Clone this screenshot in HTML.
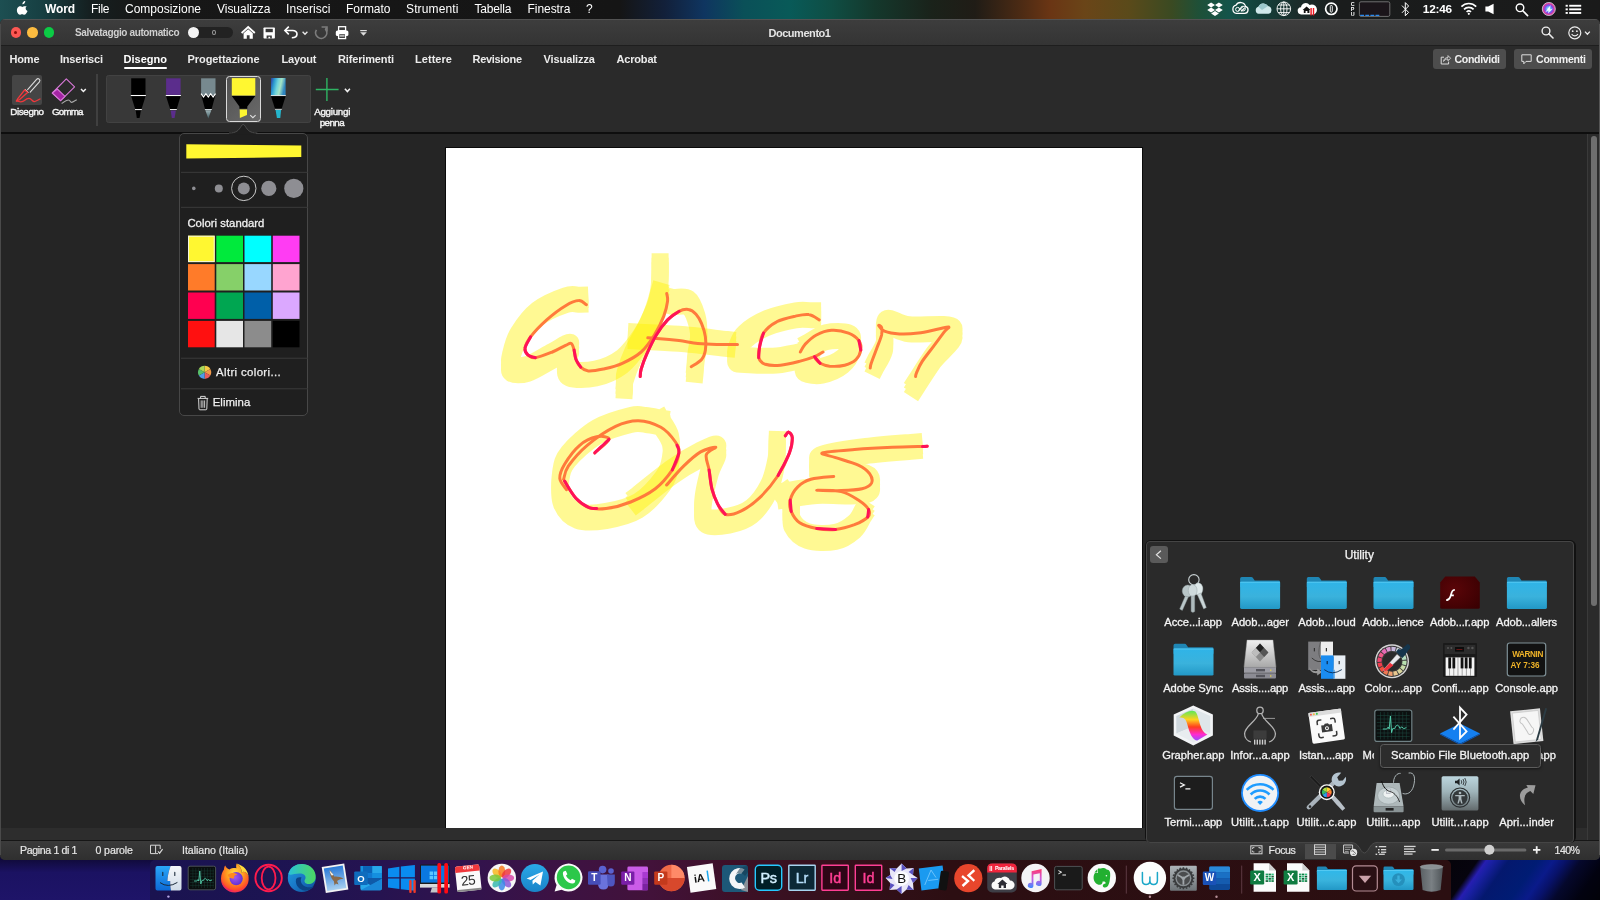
<!DOCTYPE html>
<html lang="it">
<head>
<meta charset="utf-8">
<title>Documento1</title>
<style>
*{box-sizing:border-box;margin:0;padding:0}
html,body{width:1600px;height:900px;overflow:hidden}
body{position:relative;background:#0b0b18;font-family:"Liberation Sans",sans-serif;color:#fff}
.a{position:absolute}
.t{position:absolute;white-space:pre;line-height:1;color:#fff}
#root{position:absolute;left:0;top:0;width:1600px;height:900px;will-change:transform;overflow:hidden}
svg{position:absolute;overflow:visible}
#menubar{left:0;top:0;width:1600px;height:26px;background:linear-gradient(90deg,#1d4f52 0px,#174043 40px,#151f20 90px,#171717 140px,#151515 620px,#12203a 665px,#0f3560 704px,#0a5058 744px,#085a58 790px,#0f4e44 831px,#14382c 875px,#1a221a 932px,#201c16 975px,#4a2a14 1019px,#6a3514 1050px,#6a4518 1085px,#5a4a1a 1129px,#3a4a22 1172px,#1e5038 1199px,#14544a 1229px,#14403a 1260px,#1b2b2a 1300px,#1a1c1c 1340px,#1a1a1a 1600px)}
#win{left:0;top:19px;width:1600px;height:840.5px;background:#252525;border-radius:5px;overflow:hidden}
#titlebar{left:0;top:0;width:1600px;height:26px;background:linear-gradient(#3d3d3d,#343434);border-top:1px solid #525252}
#tabs{left:0;top:26px;width:1600px;height:87px;background:#2a2a2a;border-top:1px solid #1e1e1e}
#ribline{left:0;top:112.7px;width:1600px;height:2.1px;background:#0e0e0e}
#status{left:0;top:821px;width:1600px;height:20px;background:linear-gradient(#3a3a3a,#2f2f2f);border-top:1px solid #161616}
#hscroll{left:0;top:809px;width:1600px;height:12px;background:#2d2d2d}
#vscroll{left:1586.6px;top:115px;width:13.4px;height:706px;background:#2b2b2b;border-left:1.5px solid #3a3a3a}
#vthumb{left:1590.8px;top:116.6px;width:6.6px;height:470px;border-radius:3.3px;background:#6e6e6e}
#page{left:445.2px;top:127.9px;width:698.1px;height:682px;background:#fff;border:1.5px solid #0a0a0a}
#pop{left:179px;top:133px;width:129px;height:283px;background:#1f1f1f;border:1px solid #474747;border-radius:5px}
.sw{position:absolute;width:26.8px;height:26.4px}
#util{left:1146px;top:541px;width:428px;height:302px;background:#2a2a2a;border:1px solid #454545;border-radius:4px}
#dock{left:149.5px;top:859.5px;width:1301px;height:41px;border-radius:5px 5px 0 0;background:linear-gradient(90deg,#1a1350 0,#1c1452 120px,#261350 230px,#33134c 330px,#3c1244 400px,#42123a 500px,#3c1024 600px,#33101a 700px,#2c0e12 800px,#2b0f11 1301px)}
</style>
</head>
<body>
<div id="root">
<div class="a" style="left:0;top:850px;width:160px;height:50px;background:linear-gradient(180deg,#100a3a 0,#100a3a 18%,#1b1262 45%,#1e1468 100%)"></div>
<div class="a" style="left:1440px;top:850px;width:160px;height:50px;background:linear-gradient(125deg,#040308 0,#06040e 23%,#261eb0 27.5%,#1a20a4 30.5%,#04186e 39%,#001c74 54%,#0a1a8a 62%,#08126a 68%,#05082c 76%,#020210 88%,#020208 100%)"></div>
<div id="menubar" class="a"></div>
<svg style="left:17px;top:1.3px" width="11.5" height="14" viewBox="0 0 170 208"><path fill="#fff" d="M150 71c-1 1-22 12-22 38 0 30 26 40 27 41-0 1-4 15-14 29-9 12-18 25-32 25s-18-8-34-8c-16 0-21 8-34 8s-22-12-32-26C-3 161-8 126 8 101c8-13 22-22 38-22 14 0 25 9 33 9 8 0 21-10 37-10 6 0 27 1 34-7zM111 33c7-8 11-19 11-30 0-2 0-3-0-4-11 0-24 7-31 16-6 7-12 18-12 29 0 2 0 3 1 4 1 0 2 0 3 0 10 0 22-6 29-15z"/></svg>
<span class="t" style="top:3.10px;font-size:12.0px;font-weight:bold;left:45.00px;letter-spacing:-0.151px;">Word</span>
<span class="t" style="top:3.10px;font-size:12.0px;left:91.00px;letter-spacing:-0.281px;">File</span>
<span class="t" style="top:3.10px;font-size:12.0px;left:125.00px;letter-spacing:-0.004px;">Composizione</span>
<span class="t" style="top:3.10px;font-size:12.0px;left:217.00px;letter-spacing:-0.035px;">Visualizza</span>
<span class="t" style="top:3.10px;font-size:12.0px;left:286.00px;letter-spacing:0.061px;">Inserisci</span>
<span class="t" style="top:3.10px;font-size:12.0px;left:346.00px;letter-spacing:-0.031px;">Formato</span>
<span class="t" style="top:3.10px;font-size:12.0px;left:406.00px;letter-spacing:0.143px;">Strumenti</span>
<span class="t" style="top:3.10px;font-size:12.0px;left:474.50px;letter-spacing:-0.172px;">Tabella</span>
<span class="t" style="top:3.10px;font-size:12.0px;left:527.50px;letter-spacing:-0.051px;">Finestra</span>
<span class="t" style="top:3.10px;font-size:12.0px;left:586.00px;letter-spacing:-0.688px;">?</span>
<span class="t" style="top:3.50px;font-size:11.8px;font-weight:bold;left:1422.80px;letter-spacing:-0.197px;">12:46</span>
<svg style="left:1200px;top:0" width="400" height="19" viewBox="1200 0 400 19">
 <defs><radialGradient id="siri" cx=".5" cy=".5" r=".5"><stop offset="0" stop-color="#fff"/><stop offset=".25" stop-color="#6ad0f8"/><stop offset=".55" stop-color="#7a4af0"/><stop offset=".85" stop-color="#e83a8a"/><stop offset="1" stop-color="#3a2a6a"/></radialGradient></defs>
 <!-- dropbox -->
 <g fill="#fff"><path d="M1211.1 2.4 1215 4.9 1211.1 7.4 1207.2 4.9ZM1218.9 2.4 1222.8 4.9 1218.9 7.4 1215 4.9ZM1211.1 7.6 1215 10.1 1211.1 12.6 1207.2 10.1ZM1218.9 7.6 1222.8 10.1 1218.9 12.6 1215 10.1ZM1215 10.9 1218.9 13.4 1215 15.9 1211.1 13.4Z"/></g>
 <!-- creative cloud -->
 <g fill="none" stroke="#fff" stroke-width="1.3"><path d="M1236.4 13.4A4.2 4.2 0 0 1 1236 5.2A5.2 5.2 0 0 1 1245.6 6.4A3.6 3.6 0 0 1 1244.6 13.4Z"/><path d="M1238.4 10.6 1242.6 6.8M1241 11.4 1244.6 8" stroke-width="1.1"/><circle cx="1237.6" cy="9.4" r="2" stroke-width="1"/><circle cx="1243" cy="8.6" r="2.4" stroke-width="1"/></g>
 <!-- onedrive cloud -->
 <path d="M1258.6 13.8A3.6 3.6 0 0 1 1258.4 6.8A5.4 5.4 0 0 1 1268 6A4 4 0 0 1 1268.6 13.8Z" fill="#cfe8ea"/><path d="M1258.4 6.8A5.4 5.4 0 0 1 1268 6L1262 10Z" fill="#9cc8cc"/>
 <!-- globe -->
 <g fill="none" stroke="#fff" stroke-width=".9"><circle cx="1283.8" cy="8.8" r="6.8"/><ellipse cx="1283.8" cy="8.8" rx="3.2" ry="6.8"/><path d="M1283.8 2V15.6M1277 8.8H1290.6M1278.2 5H1289.4M1278.2 12.6H1289.4"/></g>
 <!-- parallels access cloud -->
 <path d="M1301.6 14.4A3.6 3.6 0 0 1 1301 7.2A4.8 4.8 0 0 1 1309.6 5A4.6 4.6 0 0 1 1314 14.4Z" fill="#fff"/><path d="M1302.6 10 1306.6 6.4 1310.6 10H1309.4V13H1307.4V11H1305.6V13H1303.8V10Z" fill="#111"/><rect x="1310.4" y="8" width="1.4" height="7.4" fill="#f0141e"/><rect x="1312.8" y="8" width="1.4" height="7.4" fill="#f0141e"/>
 <!-- 1password -->
 <circle cx="1331.3" cy="8.8" r="5.7" fill="none" stroke="#fff" stroke-width="1.7"/><rect x="1330.3" y="5.4" width="2" height="6.8" rx="1" fill="none" stroke="#fff" stroke-width=".9"/>
 <!-- cpu box -->
 <rect x="1359.4" y="1.8" width="30.4" height="14.6" rx="1.6" fill="#1b151a" stroke="#6e6e6e" stroke-width="1"/><path d="M1360.2 15.4H1379.4" stroke="#2a8af0" stroke-width="1.1" stroke-dasharray="3.8 1.3"/>
 <!-- bluetooth -->
 <path d="M1402 5.6 1408.6 12.4 1405.3 15.8V2.6L1408.6 6 1402 12.8" fill="none" stroke="#fff" stroke-width="1" stroke-linejoin="miter"/>
 <!-- wifi -->
 <g fill="none" stroke="#fff" stroke-width="1.7"><path d="M1461.4 6.6A10.4 10.4 0 0 1 1476.2 6.6"/><path d="M1464 9.4A6.8 6.8 0 0 1 1473.6 9.4"/><path d="M1466.6 12A3.2 3.2 0 0 1 1471 12" /></g><circle cx="1468.8" cy="13.8" r="1.1" fill="#fff"/>
 <!-- speaker -->
 <path d="M1485.4 6.6H1488.2L1493.6 3.8V14.2L1488.2 11.4H1485.4Z" fill="#fff"/>
 <!-- search -->
 <circle cx="1520" cy="7.8" r="3.8" fill="none" stroke="#fff" stroke-width="1.4"/><path d="M1522.8 10.8 1527.6 15.6" stroke="#fff" stroke-width="1.6" stroke-linecap="round"/>
 <!-- siri -->
 <circle cx="1548.8" cy="9" r="6.9" fill="url(#siri)"/><circle cx="1548.8" cy="9" r="6.5" fill="none" stroke="#d8d8e0" stroke-width=".8"/><path d="M1545 12.4 1550.6 5 1549.8 9.6 1553 8.6 1548 13.4 1548.6 10.2Z" fill="#fff" opacity=".85"/>
 <!-- list -->
 <g fill="#fff"><rect x="1565.6" y="4.8" width="2.2" height="1.9"/><rect x="1569.2" y="4.8" width="12" height="1.9"/><rect x="1565.6" y="8.4" width="2.2" height="1.9"/><rect x="1569.2" y="8.4" width="12" height="1.9"/><rect x="1565.6" y="12" width="2.2" height="1.9"/><rect x="1569.2" y="12" width="12" height="1.9"/></g>
</svg>
<span class="t" style="left:1350.6px;top:1.8px;font-size:5.4px;font-weight:bold;color:#fff;line-height:4.9px;width:4px;text-align:center;white-space:normal;word-break:break-all">CPU</span>
<div id="win" class="a">
 <div id="titlebar" class="a"></div>
 <div id="tabs" class="a"></div>
 <div id="ribline" class="a"></div>
 <div id="page" class="a"></div>
 <div id="hscroll" class="a"></div>
 <div id="vscroll" class="a"></div>
 <div id="vthumb" class="a"></div>
 <div id="status" class="a"></div>
 <div class="a" style="left:0;top:5px;width:1px;height:831px;background:#4a4a4a"></div>
 <div class="a" style="left:1599px;top:5px;width:1px;height:831px;background:#555"></div>
</div>
<!-- traffic lights -->
<div class="a" style="left:10.6px;top:27.2px;width:10.6px;height:10.6px;border-radius:50%;background:#fc5753"></div>
<div class="a" style="left:14.4px;top:31px;width:3px;height:3px;border-radius:50%;background:#8c0d0a"></div>
<div class="a" style="left:27.2px;top:27.2px;width:10.6px;height:10.6px;border-radius:50%;background:#fdbc40"></div>
<div class="a" style="left:43.8px;top:27.2px;width:10.6px;height:10.6px;border-radius:50%;background:#0bcb45"></div>
<span class="t" style="top:28.10px;font-size:10.0px;font-weight:bold;color:#d0d0d0;left:75.00px;letter-spacing:-0.369px;">Salvataggio automatico</span>
<!-- toggle -->
<div class="a" style="left:187.5px;top:26.8px;width:45px;height:11.2px;border-radius:6px;background:#222"></div>
<div class="a" style="left:187.8px;top:26.8px;width:11.2px;height:11.2px;border-radius:50%;background:#f4f4f4"></div>
<div class="a" style="left:211.5px;top:30.2px;width:4.2px;height:4.6px;border-radius:50%;border:1px solid #9a9a9a"></div>
<!-- home -->
<svg style="left:241px;top:25.5px" width="14.4" height="13.2" viewBox="0 0 14.4 13.2"><path d="M0.6 7 7.2 1 13.8 7" fill="none" stroke="#fff" stroke-width="1.8" stroke-linejoin="miter"/><path d="M2.6 7.2 7.2 3.2 11.8 7.2V12.8H8.6V9.2H5.8V12.8H2.6Z" fill="#fff"/></svg>
<!-- save -->
<svg style="left:262.8px;top:26.6px" width="12.4" height="12" viewBox="0 0 12.4 12"><path d="M0.5 1.2Q0.5 .5 1.2 .5H11.2Q11.9 .5 11.9 1.2V10.8Q11.9 11.5 11.2 11.5H1.2Q.5 11.5 .5 10.8Z" fill="#fff"/><rect x="2.6" y="1.8" width="7.2" height="3.4" fill="#373737"/><path d="M3.6 11.5V8.4H8.8V11.5H7.2V9.8H5.4V11.5Z" fill="#373737"/></svg>
<!-- undo -->
<svg style="left:284px;top:26px" width="14" height="12.4" viewBox="0 0 14 12.4"><path d="M4.8 .6 .9 4.5 4.8 8.4" fill="none" stroke="#fff" stroke-width="1.6" stroke-linejoin="miter"/><path d="M1.2 4.5H8.6C14.6 4.5 14.6 11.7 7.8 11.7" fill="none" stroke="#fff" stroke-width="1.6"/></svg>
<svg style="left:302px;top:30.6px" width="6" height="4.4" viewBox="0 0 6 4.4"><path d="M.6 .7 3 3.3 5.4 .7" fill="none" stroke="#e8e8e8" stroke-width="1.3"/></svg>
<!-- redo -->
<svg style="left:315px;top:26.4px" width="12.4" height="12.8" viewBox="0 0 12.4 12.8"><path d="M1.4 3.9A5.6 5.6 0 1 0 10.7 3.4L11.5 1.5" fill="none" stroke="#7c7c7c" stroke-width="1.7"/><path d="M6.6 1H12V5.4" fill="none" stroke="#7c7c7c" stroke-width="1.6"/></svg>
<!-- print -->
<svg style="left:335.4px;top:25.8px" width="14.2" height="13.4" viewBox="0 0 14.2 13.4"><rect x="3.6" y=".7" width="7" height="4" fill="none" stroke="#fff" stroke-width="1.3"/><rect x=".8" y="4.4" width="12.6" height="5.6" rx="1.6" fill="#fff"/><rect x="3.6" y="7.6" width="7" height="5" fill="#373737" stroke="#fff" stroke-width="1.3"/><rect x="4.6" y="9.4" width="5" height="1.1" fill="#fff"/></svg>
<!-- customize -->
<svg style="left:360px;top:30px" width="7" height="6" viewBox="0 0 7 6"><rect x=".2" y="0" width="6.6" height="1.2" fill="#ddd"/><path d="M.2 2.2H6.8L3.5 5.8Z" fill="#ddd"/></svg>
<span class="t" style="top:28.00px;font-size:11.0px;font-weight:bold;color:#e4e4e4;left:768.40px;letter-spacing:-0.447px;">Documento1</span>
<!-- search -->
<svg style="left:1541px;top:26.4px" width="13" height="13" viewBox="0 0 13 13"><circle cx="5" cy="5" r="3.9" fill="none" stroke="#eee" stroke-width="1.4"/><path d="M7.8 7.8 12 12" stroke="#eee" stroke-width="1.6" stroke-linecap="round"/></svg>
<!-- smiley -->
<svg style="left:1567.5px;top:25.8px" width="24" height="14" viewBox="0 0 24 14"><circle cx="6.8" cy="6.8" r="6" fill="none" stroke="#eee" stroke-width="1.2"/><circle cx="4.7" cy="5.2" r=".9" fill="#eee"/><circle cx="8.9" cy="5.2" r=".9" fill="#eee"/><path d="M3.6 8.2Q6.8 11.6 10 8.2" fill="none" stroke="#eee" stroke-width="1.1"/><path d="M17 5.6 19.4 8.2 21.8 5.6" fill="none" stroke="#eee" stroke-width="1.3"/></svg>
<!-- tabs -->
<span class="t" style="top:53.60px;font-size:11.0px;font-weight:bold;color:#ececec;left:9.40px;letter-spacing:-0.121px;">Home</span>
<span class="t" style="top:53.60px;font-size:11.0px;font-weight:bold;color:#ececec;left:60.00px;letter-spacing:-0.205px;">Inserisci</span>
<span class="t" style="top:53.60px;font-size:11.0px;font-weight:bold;color:#fff;left:123.50px;letter-spacing:0.016px;">Disegno</span>
<div class="a" style="left:123.5px;top:67.3px;width:43.5px;height:1.6px;background:#fff;border-radius:1px"></div>
<span class="t" style="top:53.60px;font-size:11.0px;font-weight:bold;color:#ececec;left:187.50px;letter-spacing:-0.061px;">Progettazione</span>
<span class="t" style="top:53.60px;font-size:11.0px;font-weight:bold;color:#ececec;left:281.50px;letter-spacing:-0.212px;">Layout</span>
<span class="t" style="top:53.60px;font-size:11.0px;font-weight:bold;color:#ececec;left:338.00px;letter-spacing:-0.147px;">Riferimenti</span>
<span class="t" style="top:53.60px;font-size:11.0px;font-weight:bold;color:#ececec;left:415.00px;letter-spacing:0.052px;">Lettere</span>
<span class="t" style="top:53.60px;font-size:11.0px;font-weight:bold;color:#ececec;left:472.50px;letter-spacing:-0.309px;">Revisione</span>
<span class="t" style="top:53.60px;font-size:11.0px;font-weight:bold;color:#ececec;left:543.50px;letter-spacing:-0.099px;">Visualizza</span>
<span class="t" style="top:53.60px;font-size:11.0px;font-weight:bold;color:#ececec;left:616.50px;letter-spacing:-0.177px;">Acrobat</span>
<!-- share / comments -->
<div class="a" style="left:1432.5px;top:49px;width:73.5px;height:20px;border-radius:3px;background:#4d4d4d"></div>
<div class="a" style="left:1514px;top:49px;width:78px;height:20px;border-radius:3px;background:#4d4d4d"></div>
<svg style="left:1439.5px;top:53.5px" width="11" height="11" viewBox="0 0 11 11"><path d="M4 3.2H1.2V10H8.6V7.6" fill="none" stroke="#ddd" stroke-width="1"/><path d="M3.6 7.4C3.8 5 5.4 3.6 8 3.6V1.6L10.6 4.2 8 6.8V5C6 5 4.6 5.8 3.6 7.4Z" fill="none" stroke="#ddd" stroke-width=".9" stroke-linejoin="round"/></svg>
<span class="t" style="top:53.90px;font-size:10.6px;font-weight:bold;color:#f0f0f0;left:1454.50px;letter-spacing:-0.346px;">Condividi</span>
<svg style="left:1521px;top:54px" width="11" height="11" viewBox="0 0 11 11"><path d="M.8 .8H10.2V7.4H5L2.8 9.8V7.4H.8Z" fill="none" stroke="#ddd" stroke-width="1" stroke-linejoin="round"/></svg>
<span class="t" style="top:53.90px;font-size:10.6px;font-weight:bold;color:#f0f0f0;left:1536.00px;letter-spacing:-0.257px;">Commenti</span>
<!-- RIBBON -->
<div class="a" style="left:12.4px;top:75px;width:30px;height:29.8px;border-radius:2px;background:#454545"></div>
<svg style="left:0;top:72px" width="110" height="60" viewBox="0 72 110 60">
 <g fill="none" stroke-linecap="round" stroke-linejoin="round">
  <path d="M27.6 89.6 36.6 79.4A1.7 1.7 0 0 1 39.4 81.8L30.2 92.2" stroke="#dcdcdc" stroke-width="1.1"/>
  <path d="M25.2 89.4 28.2 92.4" stroke="#dcdcdc" stroke-width="1"/>
  <path d="M24.6 90 18 98.4 16.4 101 19.6 99.6 27.6 92.4Z" stroke="#f2383c" stroke-width="1.3"/>
  <path d="M16.4 101C19 101.8 22.6 102.2 24.4 100.6S28 97.8 30 98.6 32.6 101.8 34.4 101.6 38.4 99.8 40 99" stroke="#f2383c" stroke-width="1.3"/>
  <path d="M66.3 78.8 74.6 86.8 60.6 100.6 52.3 93Z" stroke="#d878d8" stroke-width="1.1"/>
  <path d="M57.3 89 65 96.4 60.6 100.6 52.3 93Z" fill="#a424a4" stroke="#d878d8" stroke-width="1.1"/>
  <path d="M62 103.3C64.5 101.5 66.5 100 68.5 100S70 102.6 71.6 102.4 75 100.6 76.4 99.9" stroke="#aaa" stroke-width="1.1"/>
  <path d="M81 88.9 83.4 91.5 85.8 88.9" stroke="#f2f2f2" stroke-width="1.5" stroke-linejoin="miter" stroke-linecap="butt"/>
 </g>
</svg>
<span class="t" style="top:106.80px;font-size:9.8px;color:#f4f4f4;left:10.30px;letter-spacing:-0.376px;-webkit-text-stroke:.4px #f4f4f4">Disegno</span>
<span class="t" style="top:106.80px;font-size:9.8px;color:#f4f4f4;left:52.00px;letter-spacing:-0.836px;-webkit-text-stroke:.4px #f4f4f4">Gomma</span>
<div class="a" style="left:96.4px;top:74.4px;width:1.3px;height:51.2px;background:#404040"></div>
<div class="a" style="left:106px;top:75px;width:204.8px;height:48px;border-radius:2.5px;background:#383838;border:1px solid #424242"></div>
<div class="a" style="left:226px;top:76.1px;width:34.8px;height:46px;border-radius:3.5px;background:linear-gradient(135deg,#505050,#6a6a6a);border:1.3px solid #dadada"></div>
<svg style="left:105px;top:72px" width="255" height="60" viewBox="105 72 255 60">
 <defs>
  <linearGradient id="gx" x1="0" y1="0" x2="1" y2="0.25"><stop offset="0" stop-color="#2f3a9c"/><stop offset=".25" stop-color="#2a9ad0"/><stop offset=".5" stop-color="#6fd4dc"/><stop offset=".72" stop-color="#a4e4c4"/><stop offset="1" stop-color="#2f86c0"/></linearGradient>
  <linearGradient id="gt" x1="0" y1="0" x2="0" y2="1"><stop offset="0" stop-color="#9fb4b8"/><stop offset="1" stop-color="#3e5a60"/></linearGradient>
 </defs>
 <!-- pen1 -->
 <rect x="131.2" y="78.3" width="14.3" height="16.6" fill="#000"/>
 <rect x="130.8" y="95" width="15.1" height="1" fill="#fff"/>
 <path d="M131.2 96.3H145.5L141.6 109H135.2Z" fill="#000"/>
 <rect x="135" y="109.1" width="6.8" height=".9" fill="#fff"/>
 <path d="M135.7 110.4H140.9L139.6 118H136.8Z" fill="#000"/>
 <!-- pen2 -->
 <rect x="166.1" y="78.3" width="14.5" height="16.6" fill="#5b2d8c"/>
 <rect x="165.8" y="95" width="15.1" height="1" fill="#fff"/>
 <path d="M166.1 96.3H180.6L176.7 109H170.1Z" fill="#000"/>
 <rect x="170" y="109.1" width="6.8" height=".9" fill="#fff"/>
 <path d="M170.7 110.4H175.9L174.6 118H171.8Z" fill="#5b2d8c"/>
 <!-- pen3 pencil -->
 <rect x="201.1" y="78.3" width="14.4" height="17" fill="#77898f"/>
 <path d="M201.1 94.5 203.5 97.6 205.9 94.5 208.3 97.6 210.7 94.5 213.1 97.6 215.5 94.5 211.7 109H205Z" fill="#000"/>
 <path d="M201.1 93.6 203.5 97 205.9 93.6 208.3 97 210.7 93.6 213.1 97 215.5 93.6" fill="none" stroke="#fff" stroke-width="1.1"/>
 <rect x="204.9" y="109.1" width="6.9" height=".9" fill="#dfe8ea"/>
 <path d="M205.3 110.2H211.3L208.3 118.6Z" fill="url(#gt)"/>
 <!-- pen4 highlighter -->
 <rect x="231.8" y="78.1" width="23.5" height="17.4" fill="#fff731"/>
 <path d="M231.8 96.1H255.3L247.3 106.5V108.8H239.4V106.5Z" fill="#000"/>
 <path d="M239.7 109.6H247V115L239.9 118Z" fill="#fff731"/>
 <path d="M250.2 115.2 252.9 117.7 255.6 115.2" fill="none" stroke="#e0e0e0" stroke-width="1.1"/>
 <!-- pen5 galaxy -->
 <rect x="271" y="78" width="14.6" height="17" fill="url(#gx)"/>
 <rect x="270.8" y="95" width="15" height=".9" fill="#e8f4f4"/>
 <path d="M271 96.3H285.6L281.7 108.8H275Z" fill="#000"/>
 <rect x="275" y="108.9" width="6.8" height=".8" fill="#e8f4f4"/>
 <path d="M275.6 109.9H281.1L280.3 118H276.9Z" fill="#25b5cc"/>
 <!-- plus -->
 <path d="M326.9 78V101M315.8 89.5H338.6" stroke="#2fb463" stroke-width="1.4" fill="none"/>
 <path d="M344.9 88.8 347.4 91.6 349.9 88.8" fill="none" stroke="#f2f2f2" stroke-width="1.5"/>
</svg>
<span class="t" style="top:107.40px;font-size:9.8px;color:#f4f4f4;left:314.20px;letter-spacing:-0.277px;-webkit-text-stroke:.4px #f4f4f4">Aggiungi</span>
<span class="t" style="top:117.90px;font-size:9.8px;color:#f4f4f4;left:319.70px;letter-spacing:-0.562px;-webkit-text-stroke:.4px #f4f4f4">penna</span>
<!-- handwriting (ink strokes) -->
<svg style="left:446px;top:148.5px" width="695.5" height="679" viewBox="446 148.5 695.5 679" role="img" aria-label="WACOM ONE">
<defs><linearGradient id="ink" gradientUnits="userSpaceOnUse" x1="560" y1="290" x2="640" y2="420" spreadMethod="reflect"><stop offset="0" stop-color="#ff7a3c"/><stop offset=".72" stop-color="#ff7a3c"/><stop offset=".9" stop-color="#ff2a55"/><stop offset="1" stop-color="#ff0a58"/></linearGradient></defs>
<g opacity=".42" fill="none" stroke="#fff200" stroke-width="17" stroke-linecap="square" stroke-linejoin="round">
<path d="M579.8 299.3C577.4 299.4 572.7 297.3 565.6 299.7C558.5 302.1 545.1 307.6 537.2 313.7C529.4 319.8 522.8 329.1 518.3 336.4C513.9 343.6 512.0 351.8 510.8 357.2C509.6 362.5 508.3 366.4 511.2 368.3C514.0 370.2 520.9 370.5 527.8 368.3C534.7 366.1 545.3 358.9 552.4 355.3C559.4 351.6 568.1 345.2 570.3 346.2C572.5 347.1 565.7 356.5 565.6 360.9C565.4 365.4 564.3 371.0 569.4 373.0C574.4 375.0 587.0 375.0 595.8 373.0C604.6 371.0 614.7 366.7 622.3 360.9C629.8 355.1 635.8 346.4 641.2 338.3C646.5 330.1 651.4 319.0 654.4 311.8C657.4 304.6 658.3 297.6 659.1 294.8"/><path transform="translate(0 -4.5)" d="M579.8 299.3C577.4 299.4 572.7 297.3 565.6 299.7C558.5 302.1 545.1 307.6 537.2 313.7C529.4 319.8 522.8 329.1 518.3 336.4C513.9 343.6 512.0 351.8 510.8 357.2C509.6 362.5 508.3 366.4 511.2 368.3C514.0 370.2 520.9 370.5 527.8 368.3C534.7 366.1 545.3 358.9 552.4 355.3C559.4 351.6 568.1 345.2 570.3 346.2C572.5 347.1 565.7 356.5 565.6 360.9C565.4 365.4 564.3 371.0 569.4 373.0C574.4 375.0 587.0 375.0 595.8 373.0C604.6 371.0 614.7 366.7 622.3 360.9C629.8 355.1 635.8 346.4 641.2 338.3C646.5 330.1 651.4 319.0 654.4 311.8C657.4 304.6 658.3 297.6 659.1 294.8"/><path transform="translate(0 4.5)" d="M579.8 299.3C577.4 299.4 572.7 297.3 565.6 299.7C558.5 302.1 545.1 307.6 537.2 313.7C529.4 319.8 522.8 329.1 518.3 336.4C513.9 343.6 512.0 351.8 510.8 357.2C509.6 362.5 508.3 366.4 511.2 368.3C514.0 370.2 520.9 370.5 527.8 368.3C534.7 366.1 545.3 358.9 552.4 355.3C559.4 351.6 568.1 345.2 570.3 346.2C572.5 347.1 565.7 356.5 565.6 360.9C565.4 365.4 564.3 371.0 569.4 373.0C574.4 375.0 587.0 375.0 595.8 373.0C604.6 371.0 614.7 366.7 622.3 360.9C629.8 355.1 635.8 346.4 641.2 338.3C646.5 330.1 651.4 319.0 654.4 311.8C657.4 304.6 658.3 297.6 659.1 294.8"/>
</g>
<g opacity=".42" fill="none" stroke="#fff200" stroke-width="17" stroke-linecap="square" stroke-linejoin="round">
<path d="M660.1 265.7C660.1 267.1 660.4 268.8 660.1 274.0C659.7 279.2 660.1 288.2 658.2 296.7C656.3 305.2 652.8 315.6 648.7 325.0C644.6 334.5 637.5 344.9 633.6 353.4C629.7 361.9 626.6 370.7 625.1 376.0C623.6 381.4 624.6 383.8 624.5 385.3"/><path transform="translate(0 -4.5)" d="M660.1 265.7C660.1 267.1 660.4 268.8 660.1 274.0C659.7 279.2 660.1 288.2 658.2 296.7C656.3 305.2 652.8 315.6 648.7 325.0C644.6 334.5 637.5 344.9 633.6 353.4C629.7 361.9 626.6 370.7 625.1 376.0C623.6 381.4 624.6 383.8 624.5 385.3"/><path transform="translate(0 4.5)" d="M660.1 265.7C660.1 267.1 660.4 268.8 660.1 274.0C659.7 279.2 660.1 288.2 658.2 296.7C656.3 305.2 652.8 315.6 648.7 325.0C644.6 334.5 637.5 344.9 633.6 353.4C629.7 361.9 626.6 370.7 625.1 376.0C623.6 381.4 624.6 383.8 624.5 385.3"/>
<path d="M660.1 296.7C661.9 297.4 666.7 300.3 671.4 301.2C676.1 302.2 684.1 299.3 688.4 302.4C692.7 305.4 695.2 313.4 696.9 319.4C698.6 325.3 699.0 332.0 698.8 338.3C698.6 344.6 696.6 352.0 696.0 357.2C695.3 362.3 695.2 367.2 695.0 369.2"/><path transform="translate(0 -4.5)" d="M660.1 296.7C661.9 297.4 666.7 300.3 671.4 301.2C676.1 302.2 684.1 299.3 688.4 302.4C692.7 305.4 695.2 313.4 696.9 319.4C698.6 325.3 699.0 332.0 698.8 338.3C698.6 344.6 696.6 352.0 696.0 357.2C695.3 362.3 695.2 367.2 695.0 369.2"/><path transform="translate(0 4.5)" d="M660.1 296.7C661.9 297.4 666.7 300.3 671.4 301.2C676.1 302.2 684.1 299.3 688.4 302.4C692.7 305.4 695.2 313.4 696.9 319.4C698.6 325.3 699.0 332.0 698.8 338.3C698.6 344.6 696.6 352.0 696.0 357.2C695.3 362.3 695.2 367.2 695.0 369.2"/>
</g>
<g opacity=".42" fill="none" stroke="#fff200" stroke-width="17" stroke-linecap="square" stroke-linejoin="round">
<path d="M636.4 336.0C643.5 336.4 663.8 337.0 679.0 338.3C694.1 339.5 719.1 342.7 727.1 343.5"/><path transform="translate(0 -4.5)" d="M636.4 336.0C643.5 336.4 663.8 337.0 679.0 338.3C694.1 339.5 719.1 342.7 727.1 343.5"/><path transform="translate(0 4.5)" d="M636.4 336.0C643.5 336.4 663.8 337.0 679.0 338.3C694.1 339.5 719.1 342.7 727.1 343.5"/>
</g>
<g opacity=".42" fill="none" stroke="#fff200" stroke-width="17" stroke-linecap="square" stroke-linejoin="round">
<path d="M812.6 314.8C809.8 314.8 803.1 313.6 795.6 314.8C788.0 316.1 775.7 318.8 767.2 322.4C758.7 326.0 749.6 331.8 744.6 336.4C739.5 340.9 738.4 346.0 737.0 349.6C735.6 353.2 734.8 356.5 736.1 358.1C737.3 359.7 737.8 359.1 744.6 359.4C751.3 359.7 765.7 361.0 776.7 360.0C787.7 359.0 805.0 354.5 810.7 353.4"/><path transform="translate(0 -4.5)" d="M812.6 314.8C809.8 314.8 803.1 313.6 795.6 314.8C788.0 316.1 775.7 318.8 767.2 322.4C758.7 326.0 749.6 331.8 744.6 336.4C739.5 340.9 738.4 346.0 737.0 349.6C735.6 353.2 734.8 356.5 736.1 358.1C737.3 359.7 737.8 359.1 744.6 359.4C751.3 359.7 765.7 361.0 776.7 360.0C787.7 359.0 805.0 354.5 810.7 353.4"/><path transform="translate(0 4.5)" d="M812.6 314.8C809.8 314.8 803.1 313.6 795.6 314.8C788.0 316.1 775.7 318.8 767.2 322.4C758.7 326.0 749.6 331.8 744.6 336.4C739.5 340.9 738.4 346.0 737.0 349.6C735.6 353.2 734.8 356.5 736.1 358.1C737.3 359.7 737.8 359.1 744.6 359.4C751.3 359.7 765.7 361.0 776.7 360.0C787.7 359.0 805.0 354.5 810.7 353.4"/>
<path d="M808.8 345.8C811.6 344.3 819.2 338.3 825.8 336.7C832.4 335.2 844.1 335.2 848.5 336.7C852.9 338.3 853.2 341.8 852.3 345.8C851.3 349.8 847.9 356.9 842.8 360.9C837.8 365.0 828.3 368.9 822.0 370.2C815.7 371.4 808.2 370.0 805.0 368.5C801.9 366.9 803.5 362.2 803.1 360.9"/><path transform="translate(0 -4.5)" d="M808.8 345.8C811.6 344.3 819.2 338.3 825.8 336.7C832.4 335.2 844.1 335.2 848.5 336.7C852.9 338.3 853.2 341.8 852.3 345.8C851.3 349.8 847.9 356.9 842.8 360.9C837.8 365.0 828.3 368.9 822.0 370.2C815.7 371.4 808.2 370.0 805.0 368.5C801.9 366.9 803.5 362.2 803.1 360.9"/><path transform="translate(0 4.5)" d="M808.8 345.8C811.6 344.3 819.2 338.3 825.8 336.7C832.4 335.2 844.1 335.2 848.5 336.7C852.9 338.3 853.2 341.8 852.3 345.8C851.3 349.8 847.9 356.9 842.8 360.9C837.8 365.0 828.3 368.9 822.0 370.2C815.7 371.4 808.2 370.0 805.0 368.5C801.9 366.9 803.5 362.2 803.1 360.9"/>
<path d="M875.9 362.6C877.3 359.8 882.7 352.5 884.4 345.8C886.1 339.2 882.2 325.6 886.3 322.8C890.4 319.9 897.8 327.5 909.0 328.8C920.1 330.2 949.3 326.2 953.4 330.9C957.5 335.6 939.8 348.2 933.5 357.2C927.2 366.1 918.6 379.8 915.6 384.4"/><path transform="translate(0 -4.5)" d="M875.9 362.6C877.3 359.8 882.7 352.5 884.4 345.8C886.1 339.2 882.2 325.6 886.3 322.8C890.4 319.9 897.8 327.5 909.0 328.8C920.1 330.2 949.3 326.2 953.4 330.9C957.5 335.6 939.8 348.2 933.5 357.2C927.2 366.1 918.6 379.8 915.6 384.4"/><path transform="translate(0 4.5)" d="M875.9 362.6C877.3 359.8 882.7 352.5 884.4 345.8C886.1 339.2 882.2 325.6 886.3 322.8C890.4 319.9 897.8 327.5 909.0 328.8C920.1 330.2 949.3 326.2 953.4 330.9C957.5 335.6 939.8 348.2 933.5 357.2C927.2 366.1 918.6 379.8 915.6 384.4"/>
</g>
<g opacity=".42" fill="none" stroke="#fff200" stroke-width="17" stroke-linecap="square" stroke-linejoin="round">
<path d="M660.9 422.1C658.4 421.7 650.9 419.9 645.8 419.5C640.8 419.0 638.9 417.5 630.7 419.5C622.5 421.5 607.1 425.5 596.7 431.6C586.3 437.7 574.3 448.9 568.3 456.1C562.4 463.4 561.9 467.8 560.8 475.0C559.7 482.3 558.9 492.9 561.7 499.6C564.6 506.3 570.4 512.8 577.8 515.5C585.2 518.1 596.1 517.2 606.1 515.5C616.2 513.8 628.8 511.1 638.3 505.3C647.7 499.5 657.5 487.9 662.8 480.7C668.2 473.5 669.1 468.7 670.4 461.8C671.6 454.9 672.0 445.7 670.4 439.1C668.8 432.5 662.5 425.0 660.9 422.1"/><path transform="translate(0 -4.5)" d="M660.9 422.1C658.4 421.7 650.9 419.9 645.8 419.5C640.8 419.0 638.9 417.5 630.7 419.5C622.5 421.5 607.1 425.5 596.7 431.6C586.3 437.7 574.3 448.9 568.3 456.1C562.4 463.4 561.9 467.8 560.8 475.0C559.7 482.3 558.9 492.9 561.7 499.6C564.6 506.3 570.4 512.8 577.8 515.5C585.2 518.1 596.1 517.2 606.1 515.5C616.2 513.8 628.8 511.1 638.3 505.3C647.7 499.5 657.5 487.9 662.8 480.7C668.2 473.5 669.1 468.7 670.4 461.8C671.6 454.9 672.0 445.7 670.4 439.1C668.8 432.5 662.5 425.0 660.9 422.1"/><path transform="translate(0 4.5)" d="M660.9 422.1C658.4 421.7 650.9 419.9 645.8 419.5C640.8 419.0 638.9 417.5 630.7 419.5C622.5 421.5 607.1 425.5 596.7 431.6C586.3 437.7 574.3 448.9 568.3 456.1C562.4 463.4 561.9 467.8 560.8 475.0C559.7 482.3 558.9 492.9 561.7 499.6C564.6 506.3 570.4 512.8 577.8 515.5C585.2 518.1 596.1 517.2 606.1 515.5C616.2 513.8 628.8 511.1 638.3 505.3C647.7 499.5 657.5 487.9 662.8 480.7C668.2 473.5 669.1 468.7 670.4 461.8C671.6 454.9 672.0 445.7 670.4 439.1C668.8 432.5 662.5 425.0 660.9 422.1"/>
</g>
<g opacity=".42" fill="none" stroke="#fff200" stroke-width="17" stroke-linecap="square" stroke-linejoin="round">
<path d="M637.3 498.6C643.1 494.1 661.7 478.7 672.3 471.3C682.8 463.8 693.1 458.0 700.6 454.2C708.2 450.5 716.0 446.2 717.6 448.8C719.2 451.3 712.5 460.3 710.1 469.4C707.6 478.5 703.5 494.9 702.9 503.4C702.2 511.8 701.9 517.4 706.3 520.2C710.6 523.0 721.4 521.7 729.0 520.2C736.5 518.6 745.0 516.3 751.6 510.9C758.2 505.6 764.5 496.4 768.6 488.3C772.7 480.1 774.8 469.3 776.2 461.8C777.6 454.3 777.0 446.5 777.1 443.5"/><path transform="translate(0 -4.5)" d="M637.3 498.6C643.1 494.1 661.7 478.7 672.3 471.3C682.8 463.8 693.1 458.0 700.6 454.2C708.2 450.5 716.0 446.2 717.6 448.8C719.2 451.3 712.5 460.3 710.1 469.4C707.6 478.5 703.5 494.9 702.9 503.4C702.2 511.8 701.9 517.4 706.3 520.2C710.6 523.0 721.4 521.7 729.0 520.2C736.5 518.6 745.0 516.3 751.6 510.9C758.2 505.6 764.5 496.4 768.6 488.3C772.7 480.1 774.8 469.3 776.2 461.8C777.6 454.3 777.0 446.5 777.1 443.5"/><path transform="translate(0 4.5)" d="M637.3 498.6C643.1 494.1 661.7 478.7 672.3 471.3C682.8 463.8 693.1 458.0 700.6 454.2C708.2 450.5 716.0 446.2 717.6 448.8C719.2 451.3 712.5 460.3 710.1 469.4C707.6 478.5 703.5 494.9 702.9 503.4C702.2 511.8 701.9 517.4 706.3 520.2C710.6 523.0 721.4 521.7 729.0 520.2C736.5 518.6 745.0 516.3 751.6 510.9C758.2 505.6 764.5 496.4 768.6 488.3C772.7 480.1 774.8 469.3 776.2 461.8C777.6 454.3 777.0 446.5 777.1 443.5"/>
<path d="M914.0 446.1C906.0 446.8 881.1 448.5 865.8 450.5C850.5 452.4 830.2 455.5 822.4 458.0C814.5 460.5 818.6 463.1 818.6 465.6C818.6 468.1 814.5 471.3 822.4 473.1C830.2 475.0 858.6 474.1 865.8 476.9C873.1 479.8 874.0 487.9 865.8 490.1C857.6 492.4 830.1 489.7 816.7 490.5C803.3 491.3 790.7 494.1 785.5 494.9"/><path transform="translate(0 -4.5)" d="M914.0 446.1C906.0 446.8 881.1 448.5 865.8 450.5C850.5 452.4 830.2 455.5 822.4 458.0C814.5 460.5 818.6 463.1 818.6 465.6C818.6 468.1 814.5 471.3 822.4 473.1C830.2 475.0 858.6 474.1 865.8 476.9C873.1 479.8 874.0 487.9 865.8 490.1C857.6 492.4 830.1 489.7 816.7 490.5C803.3 491.3 790.7 494.1 785.5 494.9"/><path transform="translate(0 4.5)" d="M914.0 446.1C906.0 446.8 881.1 448.5 865.8 450.5C850.5 452.4 830.2 455.5 822.4 458.0C814.5 460.5 818.6 463.1 818.6 465.6C818.6 468.1 814.5 471.3 822.4 473.1C830.2 475.0 858.6 474.1 865.8 476.9C873.1 479.8 874.0 487.9 865.8 490.1C857.6 492.4 830.1 489.7 816.7 490.5C803.3 491.3 790.7 494.1 785.5 494.9"/>
<path d="M785.5 494.9C786.5 496.3 790.1 498.8 791.2 503.4C792.3 507.9 789.4 516.9 792.1 522.3C794.8 527.6 800.0 533.1 807.2 535.5C814.5 537.9 827.7 538.0 835.6 536.4C843.5 534.9 849.9 530.0 854.5 526.0C859.0 522.1 861.6 515.0 863.0 512.8"/><path transform="translate(0 -4.5)" d="M785.5 494.9C786.5 496.3 790.1 498.8 791.2 503.4C792.3 507.9 789.4 516.9 792.1 522.3C794.8 527.6 800.0 533.1 807.2 535.5C814.5 537.9 827.7 538.0 835.6 536.4C843.5 534.9 849.9 530.0 854.5 526.0C859.0 522.1 861.6 515.0 863.0 512.8"/><path transform="translate(0 4.5)" d="M785.5 494.9C786.5 496.3 790.1 498.8 791.2 503.4C792.3 507.9 789.4 516.9 792.1 522.3C794.8 527.6 800.0 533.1 807.2 535.5C814.5 537.9 827.7 538.0 835.6 536.4C843.5 534.9 849.9 530.0 854.5 526.0C859.0 522.1 861.6 515.0 863.0 512.8"/>
</g>
<g fill="none" stroke="#ff7a3c" stroke-width="3" stroke-linecap="round" stroke-linejoin="round">
<path d="M586.4 304.2C585.1 303.6 582.3 299.9 578.8 300.1C575.3 300.2 570.9 302.0 565.6 305.2C560.2 308.4 552.5 314.2 546.7 319.4C540.9 324.6 534.2 331.6 530.6 336.4C527.0 341.1 525.4 344.7 525.0 347.7C524.5 350.7 526.1 352.7 527.8 354.3C529.5 355.9 531.3 357.6 535.3 357.2C539.4 356.7 547.3 353.5 552.4 351.5C557.4 349.4 562.4 346.3 565.6 344.9C568.7 343.5 569.8 342.2 571.3 343.0C572.7 343.8 573.3 346.9 574.1 349.6C574.9 352.3 574.9 356.2 576.0 359.0C577.1 361.9 578.7 364.7 580.7 366.6C582.7 368.5 584.5 370.1 588.3 370.4C592.0 370.7 597.7 369.7 603.4 368.5C609.0 367.2 616.0 365.7 622.3 362.8C628.6 360.0 635.8 356.2 641.2 351.5C646.5 346.8 650.6 340.5 654.4 334.5C658.2 328.5 661.6 321.3 663.8 315.6C666.0 309.9 667.1 304.2 667.6 300.5C668.1 296.7 666.8 294.2 666.7 292.9"/>
<path d="M640.2 376.0C640.4 374.8 640.1 372.3 641.2 368.5C642.3 364.7 644.3 359.0 646.8 353.4C649.4 347.7 652.8 340.1 656.3 334.5C659.7 328.8 663.8 323.3 667.6 319.4C671.4 315.4 675.5 312.6 679.0 310.9C682.4 309.1 685.6 308.5 688.4 309.0C691.2 309.4 693.8 311.3 696.0 313.7C698.2 316.1 700.1 319.4 701.6 323.1C703.2 326.9 704.8 332.0 705.4 336.4C706.0 340.8 706.0 345.8 705.4 349.6C704.8 353.4 704.0 356.3 701.6 359.0C699.3 361.8 693.0 365.0 691.2 366.2"/>
<path d="M647.8 337.3C649.8 337.5 654.9 337.8 660.1 338.3C665.3 338.7 672.7 339.4 679.0 340.1C685.3 340.9 691.6 342.3 697.8 343.0C704.1 343.6 710.1 343.8 716.7 343.9C723.4 344.1 734.1 343.9 737.5 343.9"/>
<path d="M819.2 319.4C817.5 318.5 812.7 314.7 808.8 314.1C804.9 313.4 800.9 314.4 795.6 315.6C790.2 316.8 782.0 318.4 776.7 321.3C771.3 324.1 766.3 328.5 763.5 332.6C760.6 336.7 760.5 341.7 759.7 345.8C758.9 349.9 757.8 354.2 758.7 357.2C759.7 360.1 761.7 362.5 765.3 363.8C769.0 365.0 774.8 365.2 780.5 364.7C786.1 364.2 793.7 362.3 799.4 360.9C805.0 359.5 810.5 357.8 814.5 356.2C818.4 354.6 821.6 352.3 823.0 351.5"/>
<path d="M800.3 351.5C801.1 350.2 802.4 346.8 805.0 343.9C807.7 341.1 812.0 336.8 816.4 334.5C820.8 332.1 826.1 330.1 831.5 329.8C836.8 329.4 843.9 330.9 848.5 332.6C853.1 334.3 856.8 337.3 858.9 340.1C860.9 343.0 861.2 346.4 860.8 349.6C860.3 352.7 858.7 356.5 856.0 359.0C853.4 361.6 849.1 363.6 844.7 364.7C840.3 365.8 833.7 366.0 829.6 365.7C825.5 365.3 822.5 364.1 820.1 362.8C817.8 361.6 816.2 358.9 815.4 358.1"/>
<path d="M870.2 367.5C870.4 366.8 870.1 366.1 871.2 362.8C872.3 359.5 875.1 352.4 876.8 347.7C878.6 343.0 880.8 337.9 881.6 334.5C882.3 331.0 882.0 328.5 881.6 326.9C881.1 325.3 878.2 324.4 878.7 325.0C879.2 325.7 880.9 329.3 884.4 330.7C887.9 332.1 893.8 333.2 899.5 333.5C905.2 333.8 912.1 333.4 918.4 332.6C924.7 331.8 932.3 329.8 937.3 328.8C942.3 327.8 947.4 326.2 948.6 326.5C949.9 326.9 947.4 327.5 944.9 330.7C942.3 333.9 937.3 340.8 933.5 345.8C929.7 350.9 925.0 356.5 922.2 360.9C919.3 365.3 917.6 369.7 916.5 372.3C915.4 374.8 915.7 375.4 915.6 376.0"/>
<path d="M594.8 452.4C597.2 450.1 608.7 441.4 609.0 438.8C609.3 436.1 601.6 435.3 596.7 436.3C591.8 437.3 585.0 440.2 579.7 444.8C574.3 449.4 567.9 458.2 564.6 463.7C561.3 469.2 559.5 473.6 559.8 477.9C560.2 482.1 565.4 487.3 566.5 489.2"/>
<path d="M564.6 480.7C566.5 483.5 571.8 493.3 575.9 497.7C580.0 502.1 584.1 505.4 589.1 507.2C594.2 508.9 599.2 509.0 606.1 508.1C613.1 507.2 622.5 504.8 630.7 501.5C638.9 498.2 648.3 493.6 655.3 488.3C662.2 482.9 668.3 475.3 672.3 469.4C676.2 463.4 678.4 457.1 678.9 452.4C679.4 447.6 678.1 445.3 675.1 441.0C672.1 436.8 667.1 430.3 660.9 426.8C654.8 423.4 645.8 420.4 638.3 420.2C630.7 420.1 624.1 421.8 615.6 425.9C607.1 430.0 595.1 438.2 587.2 444.8C579.4 451.4 572.3 459.9 568.3 465.6C564.4 471.3 564.4 476.6 563.6 478.8"/>
<path d="M666.6 484.5C669.4 481.3 677.9 471.1 683.6 465.6C689.3 460.1 695.3 454.6 700.6 451.4C706.0 448.3 714.8 446.2 715.7 446.7C716.7 447.2 707.4 450.5 706.3 454.2C705.2 458.0 708.2 463.7 709.1 469.4C710.1 475.0 710.5 482.6 711.9 488.3C713.4 493.9 715.4 499.1 717.6 503.4C719.8 507.6 721.4 512.5 725.2 513.8C729.0 515.0 734.6 513.6 740.3 510.9C746.0 508.3 752.9 503.7 759.2 497.7C765.5 491.7 773.0 482.6 778.1 475.0C783.1 467.5 787.1 458.7 789.4 452.4C791.8 446.1 792.4 440.7 792.3 437.2C792.1 433.8 789.6 431.9 788.5 431.6C787.3 431.3 785.8 434.7 785.3 435.3"/>
<path d="M927.2 445.7C921.4 445.9 904.4 446.2 892.3 446.7C880.1 447.2 866.1 448.0 854.5 449.0C842.8 449.9 825.5 451.0 822.4 452.4C819.2 453.7 829.6 455.0 835.6 457.1C841.6 459.1 852.6 462.0 858.3 464.6C863.9 467.3 867.4 470.1 869.6 473.1C871.8 476.1 872.7 480.1 871.5 482.6C870.2 485.1 867.1 487.0 862.0 488.3C857.0 489.5 848.8 489.9 841.3 490.1C833.7 490.4 816.7 489.6 816.7 489.8C816.7 489.9 834.3 489.5 841.3 491.1C848.2 492.7 853.7 496.6 858.3 499.6C862.8 502.6 867.1 506.2 868.6 509.0C870.2 511.9 870.1 514.1 867.7 516.6C865.3 519.1 859.8 522.1 854.5 524.2C849.1 526.2 841.9 528.3 835.6 528.9C829.3 529.5 822.7 529.0 816.7 527.9C810.7 526.8 803.9 525.1 799.7 522.3C795.4 519.4 792.8 514.7 791.2 510.9C789.6 507.2 789.1 503.7 790.2 499.6C791.3 495.5 794.3 489.8 797.8 486.4C801.3 482.9 805.0 480.5 811.0 478.8C817.0 477.1 829.9 476.4 833.7 476.0"/>
</g>
<g fill="none" stroke="#ff1258" stroke-width="3" stroke-linecap="round" stroke-linejoin="round">
<path d="M594.8 452.4C596.1 451.2 600.0 447.4 602.4 445.2C604.7 442.9 607.9 439.8 609.0 438.8"/>
<path d="M564.6 480.7C566.5 483.5 571.8 493.3 575.9 497.7C580.0 502.1 585.7 505.5 589.1 507.2C592.6 508.9 595.4 507.8 596.7 507.9"/>
<path d="M778.1 475.0C780.0 471.3 787.1 458.7 789.4 452.4C791.8 446.1 792.4 440.7 792.3 437.2C792.1 433.8 789.6 431.9 788.5 431.6C787.3 431.3 785.8 434.7 785.3 435.3"/>
<path d="M709.1 469.4C709.6 472.5 710.5 482.6 711.9 488.3C713.4 493.9 715.4 499.1 717.6 503.4C719.8 507.6 723.9 512.0 725.2 513.8"/>
<path d="M672.3 469.4C673.4 466.5 678.1 456.4 678.9 452.4C679.7 448.3 677.3 446.1 677.0 444.8"/>
<path d="M530.6 336.4C529.7 338.3 525.4 344.7 525.0 347.7C524.5 350.7 526.1 352.7 527.8 354.3C529.5 355.9 534.1 356.7 535.3 357.2"/>
<path d="M574.1 349.6C574.4 351.2 574.9 356.2 576.0 359.0C577.1 361.9 579.9 365.3 580.7 366.6"/>
<path d="M640.2 376.0C640.4 374.8 640.1 372.3 641.2 368.5C642.3 364.7 644.3 359.0 646.8 353.4C649.4 347.7 652.8 340.1 656.3 334.5C659.7 328.8 663.8 323.3 667.6 319.4C671.4 315.4 677.1 312.3 679.0 310.9"/>
<path d="M763.5 332.6C762.8 334.8 760.5 341.7 759.7 345.8C758.9 349.9 758.9 355.3 758.7 357.2"/>
<path d="M814.5 356.2C815.4 357.3 819.2 361.7 820.1 362.8"/>
<path d="M858.9 340.1C859.2 341.7 860.5 348.0 860.8 349.6"/>
<path d="M791.2 510.9C791.0 509.0 790.4 501.5 790.2 499.6"/>
<path d="M816.7 527.9C819.8 528.1 832.4 528.7 835.6 528.9"/>
<path d="M868.6 509.0C868.5 510.3 867.9 515.3 867.7 516.6"/>
<path d="M922.5 445.9C923.3 445.9 926.4 445.8 927.2 445.7"/>
</g></svg>
<!-- POPOVER -->
<svg style="left:170px;top:120.3px" width="150" height="20" viewBox="170 120 150 20"><path d="M229 133.3C236.5 133.3 238.5 130.5 241.2 126.2Q243.2 122.6 245.2 126.2C247.9 130.5 249.9 133.3 257.4 133.3V135H229Z" fill="#1f1f1f"/><path d="M229 133C236.5 133 238.5 130.5 241.2 126.2Q243.2 122.6 245.2 126.2C247.9 130.5 249.9 133 257.4 133" fill="none" stroke="#4c4c4c" stroke-width="1"/></svg>
<div id="pop" class="a" style="clip-path:polygon(0 0,50px 0,50px 1.2px,77px 1.2px,77px 0,100% 0,100% 100%,0 100%)"></div>
<svg style="left:179.5px;top:133.1px" width="130" height="285" viewBox="179.5 132.5 130 285">
<path d="M185.8 143.8 300.8 145V156.6L185.8 158Z" fill="#fff731"/>
<rect x="180.5" y="171.3" width="127" height="1" fill="#3b3b3b"/><rect x="180.5" y="206.3" width="127" height="1" fill="#3b3b3b"/><rect x="180.5" y="357.2" width="127" height="1" fill="#3b3b3b"/><rect x="180.5" y="387.8" width="127" height="1" fill="#3b3b3b"/>
<circle cx="193.3" cy="187.9" r="1.8" fill="#8e8e93"/>
<circle cx="218.3" cy="187.9" r="4" fill="#8e8e93"/>
<circle cx="243.3" cy="187.9" r="6" fill="#8e8e93"/>
<circle cx="268.3" cy="187.9" r="7.6" fill="#8e8e93"/>
<circle cx="293.3" cy="187.9" r="9.6" fill="#8e8e93"/>
<circle cx="243.3" cy="187.9" r="12.2" fill="none" stroke="#c8c8c8" stroke-width="1"/>
<rect x="187.5" y="235.2" width="26.7" height="26.4" fill="#fff731"/>
<rect x="215.8" y="235.2" width="26.7" height="26.4" fill="#00ea3c"/>
<rect x="244.0" y="235.2" width="26.7" height="26.4" fill="#00ffff"/>
<rect x="272.3" y="235.2" width="26.7" height="26.4" fill="#ff3cf3"/>
<rect x="187.5" y="263.6" width="26.7" height="26.4" fill="#ff7b29"/>
<rect x="215.8" y="263.6" width="26.7" height="26.4" fill="#86d069"/>
<rect x="244.0" y="263.6" width="26.7" height="26.4" fill="#98d7ff"/>
<rect x="272.3" y="263.6" width="26.7" height="26.4" fill="#ffa4d0"/>
<rect x="187.5" y="292.0" width="26.7" height="26.4" fill="#ff0050"/>
<rect x="215.8" y="292.0" width="26.7" height="26.4" fill="#00a651"/>
<rect x="244.0" y="292.0" width="26.7" height="26.4" fill="#005fa8"/>
<rect x="272.3" y="292.0" width="26.7" height="26.4" fill="#dba8ff"/>
<rect x="187.5" y="320.4" width="26.7" height="26.4" fill="#ff1010"/>
<rect x="215.8" y="320.4" width="26.7" height="26.4" fill="#e6e6e6"/>
<rect x="244.0" y="320.4" width="26.7" height="26.4" fill="#8c8c8c"/>
<rect x="272.3" y="320.4" width="26.7" height="26.4" fill="#000000"/>
<rect x="188" y="235.7" width="25.7" height="25.4" fill="none" stroke="#f4f4e0" stroke-width="1"/>
<path d="M204.1 371.8L204.10 365.20A6.6 6.6 0 0 1 209.82 368.50Z" fill="#f6c944"/>
<path d="M204.1 371.8L209.82 368.50A6.6 6.6 0 0 1 209.82 375.10Z" fill="#f29a4a"/>
<path d="M204.1 371.8L209.82 375.10A6.6 6.6 0 0 1 204.10 378.40Z" fill="#e85d5d"/>
<path d="M204.1 371.8L204.10 378.40A6.6 6.6 0 0 1 198.38 375.10Z" fill="#4d9be8"/>
<path d="M204.1 371.8L198.38 375.10A6.6 6.6 0 0 1 198.38 368.50Z" fill="#58c06a"/>
<path d="M204.1 371.8L198.38 368.50A6.6 6.6 0 0 1 204.10 365.20Z" fill="#a8d85a"/>
<g fill="none" stroke="#d8d8d8" stroke-width="1" transform="translate(.5 .3)"><path d="M196.6 397.6H207.2M199.6 397.4V395.6H204.2V397.4"/><path d="M197.6 397.8 198 408.2Q198 409 198.9 409H204.9Q205.8 409 205.8 408.2L206.2 397.8"/><path d="M200.2 399.6V407M201.9 399.6V407M203.6 399.6V407" stroke-width=".9"/></g>
</svg>
<span class="t" style="top:218.15px;font-size:11.3px;color:#f0f0f0;left:187.40px;letter-spacing:0.028px;-webkit-text-stroke:.3px #f0f0f0">Colori standard</span>
<span class="t" style="top:366.90px;font-size:11.4px;color:#f0f0f0;left:216.10px;letter-spacing:0.357px;-webkit-text-stroke:.25px #f0f0f0">Altri colori...</span>
<span class="t" style="top:397.30px;font-size:11.4px;color:#f0f0f0;left:212.70px;letter-spacing:0.040px;-webkit-text-stroke:.25px #f0f0f0">Elimina</span>
<!-- UTILITY PANEL -->
<div class="a" style="left:1144.5px;top:539.5px;width:431px;height:303px;border-radius:6px;background:#111"></div>
<div id="util" class="a"></div>
<div class="a" style="left:1150.2px;top:546.2px;width:17.4px;height:17px;border-radius:3px;background:#5a5a5a"></div>
<svg style="left:1146px;top:541px" width="428" height="300" viewBox="1146 541 428 300">
<defs><linearGradient id="fb" x1="0" y1="0" x2="0" y2="1"><stop offset="0" stop-color="#2fb4e8"/><stop offset=".55" stop-color="#3ab2dc"/><stop offset="1" stop-color="#2298c6"/></linearGradient><linearGradient id="slv" x1="0" y1="0" x2="0" y2="1"><stop offset="0" stop-color="#f0f0f0"/><stop offset="1" stop-color="#a8a8a8"/></linearGradient><linearGradient id="rb" x1="0" y1="0" x2="0" y2="1"><stop offset="0" stop-color="#58e85a"/><stop offset=".3" stop-color="#ffd21e"/><stop offset=".55" stop-color="#ff3c1e"/><stop offset=".8" stop-color="#ff2ad0"/><stop offset="1" stop-color="#9a4cff"/></linearGradient><linearGradient id="vo" x1="0" y1="0" x2="0" y2="1"><stop offset="0" stop-color="#bcd6de"/><stop offset=".45" stop-color="#9fb4ba"/><stop offset="1" stop-color="#626a6c"/></linearGradient><radialGradient id="fl" cx=".35" cy=".4" r=".8"><stop offset="0" stop-color="#5a0508"/><stop offset="1" stop-color="#3a0002"/></radialGradient></defs>
<path d="M1160.9 550.8 1156.4 554.7 1160.9 558.6" fill="none" stroke="#e0e0e0" stroke-width="1.2"/>
<g><circle cx="1193.8999999999999" cy="579.8" r="5.2" fill="none" stroke="#c9d2d4" stroke-width="1.1"/><g fill="#b9c6c8" stroke="#8e9a9c" stroke-width=".4"><ellipse cx="1187.8" cy="591" rx="5.6" ry="6" /><path d="M1185.3 596 1179.7 609 1182.3 610.4 1188.3 597Z"/><ellipse cx="1198.3" cy="589" rx="4.6" ry="6.2" fill="#dfe9ea"/><path d="M1197.3 594.5 1203.7 609 1206.3 607.6 1200.8999999999999 593Z" fill="#cbd6d8"/><ellipse cx="1192.7" cy="590.5" rx="4.4" ry="6" fill="#cfdadc"/><path d="M1191.1 596H1194.7V611.6L1192.8999999999999 612.4 1191.1 611.6Z" fill="#aebabc"/></g></g>
<path d="M1240.1 578.7Q1240.1 577.1 1241.6999999999998 577.1H1251.1Q1252.5 577.1 1253.3 578.5L1254.6999999999998 580.5H1278.6999999999998Q1280.1 580.5 1280.1 581.9V587.1H1240.1Z" fill="#1f86b4"/>
<rect x="1240.1" y="581.7" width="40" height="27.2" rx="1.4" fill="url(#fb)"/>
<rect x="1240.1" y="581.7" width="40" height="1" rx=".5" fill="#5ccdf5" opacity=".8"/>
<path d="M1306.8 578.7Q1306.8 577.1 1308.3999999999999 577.1H1317.8Q1319.2 577.1 1320.0 578.5L1321.3999999999999 580.5H1345.3999999999999Q1346.8 580.5 1346.8 581.9V587.1H1306.8Z" fill="#1f86b4"/>
<rect x="1306.8" y="581.7" width="40" height="27.2" rx="1.4" fill="url(#fb)"/>
<rect x="1306.8" y="581.7" width="40" height="1" rx=".5" fill="#5ccdf5" opacity=".8"/>
<path d="M1373.5 578.7Q1373.5 577.1 1375.1 577.1H1384.5Q1385.9 577.1 1386.7 578.5L1388.1 580.5H1412.1Q1413.5 580.5 1413.5 581.9V587.1H1373.5Z" fill="#1f86b4"/>
<rect x="1373.5" y="581.7" width="40" height="27.2" rx="1.4" fill="url(#fb)"/>
<rect x="1373.5" y="581.7" width="40" height="1" rx=".5" fill="#5ccdf5" opacity=".8"/>
<path d="M1445.2 576.4H1474.8L1479.8 582.4V607.4Q1479.8 608.8 1478.2 608.8H1441.8Q1440.2 608.8 1440.2 607.4V582.4Z" fill="url(#fl)"/>
<path d="M1454.8 589.0C1451.2 589.0 1450.6000000000001 593.4 1449.8 595.8S1447.8 599.0 1446.2 599.1999999999999V601.0C1449.8 601.0 1450.8 597.8 1451.4 596.1999999999999H1453.8V594.4H1452.0C1452.6000000000001 592.4 1453.0 590.8 1454.8 590.8Z" fill="#fff"/>
<path d="M1506.9 578.7Q1506.9 577.1 1508.5 577.1H1517.9Q1519.3000000000002 577.1 1520.1000000000001 578.5L1521.5 580.5H1545.5Q1546.9 580.5 1546.9 581.9V587.1H1506.9Z" fill="#1f86b4"/>
<rect x="1506.9" y="581.7" width="40" height="27.2" rx="1.4" fill="url(#fb)"/>
<rect x="1506.9" y="581.7" width="40" height="1" rx=".5" fill="#5ccdf5" opacity=".8"/>
<path d="M1173.5 645.4Q1173.5 643.8 1175.1 643.8H1184.5Q1185.9 643.8 1186.7 645.1999999999999L1188.1 647.1999999999999H1212.1Q1213.5 647.1999999999999 1213.5 648.5999999999999V653.8H1173.5Z" fill="#1f86b4"/>
<rect x="1173.5" y="648.4" width="40" height="27.2" rx="1.4" fill="url(#fb)"/>
<rect x="1173.5" y="648.4" width="40" height="1" rx=".5" fill="#5ccdf5" opacity=".8"/>
<g><path d="M1247 640H1273L1276 667.4H1244Z" fill="url(#slv)" stroke="#9a9a9a" stroke-width=".4"/><path d="M1260 643.6 1268.4 652.6 1260 661.6 1251.6 652.6Z" fill="#8a8a8a"/><path d="M1260 643.6 1264.2 648.1 1260 652.6 1255.8 648.1Z" fill="#222"/><path d="M1264.2 648.1 1268.4 652.6 1264.2 657.1 1260 652.6Z" fill="#555"/><path d="M1255.8 648.1 1260 652.6 1255.8 657.1 1251.6 652.6Z" fill="#bdbdbd"/><rect x="1244" y="667.4" width="32" height="5.4" fill="#9c9ca4"/><rect x="1244" y="673.2" width="32" height="5.4" rx="1" fill="#8c8c94"/><rect x="1256" y="669" width="9" height="2.4" fill="#55555c"/><rect x="1256" y="674.8" width="9" height="2.4" fill="#55555c"/><rect x="1270" y="669.6" width="1.4" height="1.2" fill="#e8d44a"/><rect x="1270" y="675.4" width="1.4" height="1.2" fill="#e8d44a"/></g>
<g><rect x="1308.2" y="641.6" width="12.4" height="28.4" fill="#7d7d80"/><rect x="1320.6000000000001" y="641.6" width="12.4" height="28.4" fill="#eeeeee"/><path d="M1320.6000000000001 641.6C1318.2 650 1318.2 656 1321.2 659.6V670" fill="none" stroke="#555" stroke-width=".8"/><rect x="1313.8" y="648" width="1.2" height="3.4" fill="#333"/><rect x="1325.8" y="648" width="1.2" height="3.4" fill="#333"/><path d="M1311.8 658Q1318.2 664 1324.2 660" fill="none" stroke="#333" stroke-width=".9"/><path d="M1309.2 666.6C1310.2 670.6 1314.2 671.6 1317.2 671V668.6L1322.2 672 1317.2 675.4V673.2C1312.2 673.6 1309.6000000000001 671 1309.2 666.6Z" fill="#9a9a9a"/><rect x="1321.0" y="655.4" width="12.4" height="23.4" fill="#1a8cf0"/><rect x="1333.4" y="655.4" width="12" height="23.4" fill="#e8eef4"/><path d="M1333.8 655.4C1330.8 662 1331.0 667 1334.6000000000001 670V678.8H1333.4" fill="#1a8cf0"/><rect x="1326.6000000000001" y="661" width="1.2" height="3.2" fill="#0a2a50"/><rect x="1338.6000000000001" y="661" width="1.2" height="3.2" fill="#333"/><path d="M1324.2 669.6Q1332.2 676 1341.8 669.6" fill="none" stroke="#0a2a50" stroke-width=".9"/></g>
<circle cx="1392" cy="661.3" r="17" fill="#d6d6d6"/><circle cx="1392" cy="661.3" r="15.6" fill="#3a3a3a"/>
<path d="M1378.3 656.3A14.6 14.6 0 0 1 1380.6 652.2L1383.9 654.8A10.4 10.4 0 0 0 1382.2 657.7Z" fill="#f05a8c"/>
<path d="M1381.2 651.4A14.6 14.6 0 0 1 1384.9 648.5L1387.0 652.2A10.4 10.4 0 0 0 1384.3 654.3Z" fill="#e86ab4"/>
<path d="M1385.8 648.1A14.6 14.6 0 0 1 1390.3 646.8L1390.8 651.0A10.4 10.4 0 0 0 1387.6 651.9Z" fill="#d89ad0"/>
<path d="M1391.4 646.7A14.6 14.6 0 0 1 1396.0 647.3L1394.9 651.3A10.4 10.4 0 0 0 1391.5 650.9Z" fill="#c8b8dc"/>
<path d="M1397.0 647.6A14.6 14.6 0 0 1 1401.1 649.9L1398.5 653.2A10.4 10.4 0 0 0 1395.6 651.5Z" fill="#c8d0d8"/>
<path d="M1401.9 650.5A14.6 14.6 0 0 1 1404.8 654.2L1401.1 656.3A10.4 10.4 0 0 0 1399.0 653.6Z" fill="#bcd8d0"/>
<path d="M1405.2 655.1A14.6 14.6 0 0 1 1406.5 659.6L1402.3 660.1A10.4 10.4 0 0 0 1401.4 656.9Z" fill="#b4dcc0"/>
<path d="M1406.6 660.7A14.6 14.6 0 0 1 1406.0 665.3L1402.0 664.2A10.4 10.4 0 0 0 1402.4 660.8Z" fill="#b8e0b0"/>
<path d="M1405.7 666.3A14.6 14.6 0 0 1 1403.4 670.4L1400.1 667.8A10.4 10.4 0 0 0 1401.8 664.9Z" fill="#c8dca8"/>
<path d="M1402.8 671.2A14.6 14.6 0 0 1 1399.1 674.1L1397.0 670.4A10.4 10.4 0 0 0 1399.7 668.3Z" fill="#d8d49c"/>
<path d="M1398.2 674.5A14.6 14.6 0 0 1 1393.7 675.8L1393.2 671.6A10.4 10.4 0 0 0 1396.4 670.7Z" fill="#e8c890"/>
<path d="M1392.6 675.9A14.6 14.6 0 0 1 1388.0 675.3L1389.1 671.3A10.4 10.4 0 0 0 1392.5 671.7Z" fill="#f0a070"/>
<path d="M1387.0 675.0A14.6 14.6 0 0 1 1382.9 672.7L1385.5 669.4A10.4 10.4 0 0 0 1388.4 671.1Z" fill="#f07850"/>
<path d="M1382.1 672.1A14.6 14.6 0 0 1 1379.2 668.4L1382.9 666.3A10.4 10.4 0 0 0 1385.0 669.0Z" fill="#f0503c"/>
<path d="M1378.8 667.5A14.6 14.6 0 0 1 1377.5 663.0L1381.7 662.5A10.4 10.4 0 0 0 1382.6 665.7Z" fill="#f03c4c"/>
<path d="M1377.4 661.9A14.6 14.6 0 0 1 1378.0 657.3L1382.0 658.4A10.4 10.4 0 0 0 1381.6 661.8Z" fill="#f04470"/>
<circle cx="1392" cy="661.3" r="9.4" fill="#2a2a2a"/>
<path d="M1383 670.3L1397 654.3L1400.4 657.3L1386 671.3Z" fill="#e8e8ec" stroke="#999" stroke-width=".4"/><path d="M1383 670.3L1390 662.6999999999999L1393.4 665.3L1386 671.3Z" fill="#f0323c"/><path d="M1396 651.6999999999999L1402.4 657.9L1404.4 655.6999999999999L1410 648.3Q1411 644.6999999999999 1407.4 643.9L1401 649.6999999999999L1398.4 648.9Z" fill="#15354c"/>
<rect x="1443" y="643" width="34" height="34" rx="1" fill="#1a1a1a"/><rect x="1444.6" y="645" width="30.8" height="9" fill="#2c2c2c"/><rect x="1455" y="647" width="9" height="4.6" fill="#0c0c0c"/><rect x="1456.4" y="649" width="6" height=".8" fill="#7a1818"/><circle cx="1448" cy="648" r="1" fill="#555"/><circle cx="1451.4" cy="648" r="1" fill="#555"/><circle cx="1468.4" cy="648" r="1.2" fill="#555"/><circle cx="1472.4" cy="648" r="1.2" fill="#555"/><rect x="1445.6" y="657.4" width="28.8" height="18.4" fill="#f4f4f4"/>
<rect x="1449.51" y="657.4" width=".5" height="18.4" fill="#555"/>
<rect x="1453.62" y="657.4" width=".5" height="18.4" fill="#555"/>
<rect x="1457.73" y="657.4" width=".5" height="18.4" fill="#555"/>
<rect x="1461.84" y="657.4" width=".5" height="18.4" fill="#555"/>
<rect x="1465.95" y="657.4" width=".5" height="18.4" fill="#555"/>
<rect x="1470.06" y="657.4" width=".5" height="18.4" fill="#555"/>
<rect x="1448.31" y="657.4" width="2.8" height="11" fill="#111"/>
<rect x="1452.42" y="657.4" width="2.8" height="11" fill="#111"/>
<rect x="1460.64" y="657.4" width="2.8" height="11" fill="#111"/>
<rect x="1464.75" y="657.4" width="2.8" height="11" fill="#111"/>
<rect x="1468.86" y="657.4" width="2.8" height="11" fill="#111"/>
<rect x="1507.3" y="643" width="38.4" height="33" rx="2.4" fill="#121212" stroke="#7e9096" stroke-width="1.2"/>
<g><path d="M1193.3 705.4L1212.8999999999999 714.4V735.4L1193.3 745.4L1173.7 735.4V714.4Z" fill="#f2f4f6"/><path d="M1193.3 708.4L1210.3 716.0V733.4L1193.3 726.4Z" fill="#dfe6ea"/><path d="M1193.3 708.4L1176.3 716.0V733.4L1193.3 726.4Z" fill="#cfd8de"/><path d="M1193.3 726.4L1210.3 733.4L1193.3 742.4L1176.3 733.4Z" fill="#e8ecef"/><path d="M1179.3 717.4C1185.3 711.4 1191.3 709.4 1195.3 711.4C1199.3 715.4 1199.3 731.4 1207.3 734.4L1197.3 740.4C1189.3 739.4 1188.3 723.4 1185.3 719.4C1183.3 717.4 1181.3 717.4 1179.3 717.4Z" fill="url(#rb)"/></g>
<g fill="none" stroke="#b4b4b4" stroke-width="1.3"><circle cx="1260" cy="710.4" r="3.2"/><path d="M1258.4 713.6C1256 722 1245 726 1244.6 733.6C1244.4 738 1248 741 1251 742"/><path d="M1261.6 713.6C1264 722 1275 726 1275.4 733.6C1275.6 738 1272 741 1269 742"/><path d="M1263 718.4H1275" stroke-width=".8"/></g><rect x="1253.4" y="730.4" width="13.2" height="8.4" fill="#3c3c3c"/><g fill="#cfcfcf"><rect x="1254" y="739.6" width="1.4" height="5"/><rect x="1256.6" y="739.6" width="1.4" height="5"/><rect x="1259.2" y="739.6" width="1.4" height="5"/><rect x="1261.8" y="739.6" width="1.4" height="5"/><rect x="1264.4" y="739.6" width="1.4" height="5"/></g>
<g transform="rotate(-8 1326.7 726.2)"><rect x="1310.3" y="710.6" width="32.8" height="31.2" rx="1.6" fill="#fafafa"/><rect x="1310.3" y="710.6" width="32.8" height="4" fill="#dcdcdc"/><circle cx="1312.7" cy="712.6" r="1" fill="#f25a52"/><circle cx="1315.7" cy="712.6" r="1" fill="#f5bd3c"/><circle cx="1318.7" cy="712.6" r="1" fill="#3bc84a"/><g fill="none" stroke="#3a3a3a" stroke-width="1.5"><path d="M1317.7 723.8000000000001V721.2Q1317.7 719.2 1319.7 719.2H1322.3"/><path d="M1335.7 723.8000000000001V721.2Q1335.7 719.2 1333.7 719.2H1331.1000000000001"/><path d="M1317.7 732.2V734.8000000000001Q1317.7 736.8000000000001 1319.7 736.8000000000001H1322.3"/><path d="M1335.7 732.2V734.8000000000001Q1335.7 736.8000000000001 1333.7 736.8000000000001H1331.1000000000001"/></g><path d="M1321.3 724.8000000000001H1324.1000000000001L1325.1000000000001 723.4000000000001H1328.3L1329.3 724.8000000000001H1332.1000000000001V731.8000000000001H1321.3Z" fill="#3a3a3a"/><circle cx="1326.7" cy="728.2" r="2" fill="#fafafa"/><circle cx="1326.7" cy="728.2" r="1" fill="#3a3a3a"/></g>
<rect x="1374.8" y="710" width="37" height="31.4" rx="2.2" fill="#0c1010" stroke="#6f8084" stroke-width="1.2"/>
<path d="M1380.5 712V739.4M1384.2 712V739.4M1387.9 712V739.4M1391.6 712V739.4M1395.3 712V739.4M1399.0 712V739.4M1402.7 712V739.4M1406.4 712V739.4M1376.8 715.5H1409.8M1376.8 719.0H1409.8M1376.8 722.5H1409.8M1376.8 726.0H1409.8M1376.8 729.5H1409.8M1376.8 733.0H1409.8M1376.8 736.5H1409.8" stroke="#1d4a40" stroke-width=".5" fill="none"/>
<path d="M1382.8 729H1386.8L1388.2 727L1389.2 729L1390.3999999999999 716L1391.6 732.6L1392.8 728.4H1394.8C1396.3999999999999 724 1398.3999999999999 724 1399.8 728.4L1401.8 727L1403.8 728.6L1406.3999999999999 727.6" fill="none" stroke="#58d8b4" stroke-width=".9"/>
<path d="M1440 733.6L1460 723.4L1480 733.6L1460 743.8Z" fill="#1580f0"/><path d="M1440 733.6L1460 743.8L1480 733.6V734.6L1460 745L1440 734.6Z" fill="#0d5cc0"/><path d="M1453.4 716.6L1466.6 731.4L1460 738V707.6L1466.6 714.6L1453.4 729.6" fill="none" stroke="#fdfdfd" stroke-width="1.8" stroke-linejoin="miter"/>
<g transform="rotate(-6 1527.7 725.6)"><rect x="1511.7" y="709.6" width="30" height="33" fill="#dedede"/><rect x="1513.7" y="711.6" width="26" height="29" fill="#f6f6f6" stroke="#bbb" stroke-width=".5"/><path d="M1521.7 717.6Q1525.7 715.6 1527.7 719.6L1531.7 727.6Q1534.7 729.6 1531.7 733.6Q1527.7 736.6 1526.7 731.6L1522.7 723.6Q1518.7 721.6 1521.7 717.6Z" fill="none" stroke="#c4c4c4" stroke-width="1"/></g><path d="M1545.3 708.0L1547.1000000000001 708.6L1538.1000000000001 739.6L1535.7 742.0L1536.3 739.0Z" fill="#2c3c44"/>
<rect x="1174.4" y="776.3" width="38" height="33" rx="2.6" fill="#1d1d1d" stroke="#77858c" stroke-width="1.2"/>
<path d="M1180.0 782.6999999999999L1184.4 784.9L1180.0 787.0999999999999M1185.4 788.9H1190.4" fill="none" stroke="#f4f4f4" stroke-width="1.2"/>
<circle cx="1260.1" cy="792.9" r="19" fill="#1e8cff"/><circle cx="1260.1" cy="792.9" r="17.2" fill="#f0f2f4"/><g fill="none" stroke="#1e9cff" stroke-width="2.6" stroke-linecap="butt"><path d="M1246.6999999999998 789.9A18.6 18.6 0 0 1 1273.5 789.9"/><path d="M1250.6999999999998 794.5A13 13 0 0 1 1269.5 794.5"/><path d="M1254.6999999999998 798.9A7.6 7.6 0 0 1 1265.5 798.9"/></g><path d="M1257.3 801.9Q1260.1 799.5 1262.8999999999999 801.9L1260.1 804.9Z" fill="#1e9cff"/>
<g><path d="M1309.8 777.2L1311.3999999999999 775.6L1325.8 790.2L1324.2 791.8000000000001Z" fill="#1a1a1a" stroke="#555" stroke-width=".4"/><path d="M1328.8 795.6L1331.8 793.0L1339.8 801.6L1345.2 808.2L1342.3999999999999 810.8000000000001L1336.3999999999999 804.6Z" fill="#b8c0c8"/><path d="M1308.8 807.2L1333.2 783.2" stroke="#aab4bc" stroke-width="4.4" stroke-linecap="round"/><circle cx="1310.0" cy="806.6" r="1.3" fill="#2b2b2b"/><path d="M1331.8 781.2C1330.8 775.2 1335.8 771.2 1341.2 772.8000000000001L1337.2 777.2L1338.8 780.8000000000001L1342.8 780.6L1345.8 776.8000000000001C1347.3999999999999 783.2 1341.8 788.2 1335.8 785.8000000000001Z" fill="#b4c4d0"/><circle cx="1326.8" cy="792.2" r="8" fill="#fafafa"/><circle cx="1326.8" cy="792.2" r="6.6" fill="#151515"/>
<path d="M1326.8 792.2L1326.80 787.20A5 5 0 0 1 1331.13 789.70Z" fill="#ffcc33"/>
<path d="M1326.8 792.2L1331.13 789.70A5 5 0 0 1 1331.13 794.70Z" fill="#ff8833"/>
<path d="M1326.8 792.2L1331.13 794.70A5 5 0 0 1 1326.80 797.20Z" fill="#ee3355"/>
<path d="M1326.8 792.2L1326.80 797.20A5 5 0 0 1 1322.47 794.70Z" fill="#3399ee"/>
<path d="M1326.8 792.2L1322.47 794.70A5 5 0 0 1 1322.47 789.70Z" fill="#33bb66"/>
<path d="M1326.8 792.2L1322.47 789.70A5 5 0 0 1 1326.80 787.20Z" fill="#aadd44"/>
</g>
<g><path d="M1376.6 783L1399.6 783L1403.6 806.6H1373.6Z" fill="#aeb8ba"/><rect x="1373.6" y="806.6" width="30" height="5.6" rx="1" fill="#8a9496"/><rect x="1385.6" y="808" width="8" height="2.6" fill="#222"/><ellipse cx="1388.6" cy="795.6" rx="11" ry="8.6" fill="#c6d0d2" stroke="#8a9496" stroke-width=".5"/><ellipse cx="1388.6" cy="794" rx="5.6" ry="4" fill="#eef2f2" stroke="#9aa" stroke-width=".5"/><rect x="1386.6" y="789" width="4" height="4.4" fill="#dfe6e6" stroke="#889" stroke-width=".4"/><path d="M1381.6 781C1383.6 788 1386.6 790 1388.6 791" fill="none" stroke="#111" stroke-width="1"/><path d="M1393.6 786C1392.6 776 1397.6 773 1400.6 773.4M1408.6 773C1414.6 772 1415.6 778 1413.6 786C1411.6 793 1406.6 795 1402.6 793.4" fill="none" stroke="#aab4b6" stroke-width="1"/><path d="M1388.6 791C1393.6 792 1397.6 796 1399.6 802" fill="none" stroke="#222" stroke-width=".9"/></g>
<rect x="1441.6" y="776.2" width="36.8" height="34.4" rx="1.6" fill="url(#vo)"/><circle cx="1460.0" cy="797.6" r="9.6" fill="none" stroke="#2a2e30" stroke-width="1.2"/><circle cx="1460.0" cy="797.6" r="7.6" fill="#34393b"/><g fill="#aab6ba"><circle cx="1460.0" cy="793.0" r="1.3"/><path d="M1455.1999999999998 795.0H1464.8V796.2H1461.3999999999999V798.8000000000001L1462.6 803.4000000000001H1461.1999999999998L1460.0 799.8000000000001L1458.8 803.4000000000001H1457.3999999999999L1458.6 798.8000000000001V796.2H1455.1999999999998Z"/></g><path d="M1455.0 780.8000000000001H1457.0L1459.6 778.6V785.4000000000001L1457.0 783.2H1455.0Z" fill="#1e2224"/><g fill="none" stroke="#1e2224" stroke-width=".8"><path d="M1461.1999999999998 780.2Q1462.3999999999999 782.0 1461.1999999999998 783.8000000000001"/><path d="M1463.0 779.0Q1465.0 782.0 1463.0 785.0"/><path d="M1464.8 778.0Q1467.6 782.0 1464.8 786.0"/></g>
<path d="M1526.9 784.9L1536.1000000000001 785.9L1533.3000000000002 794.5L1530.5 791.3C1524.9 792.9 1522.9 797.9 1524.3000000000002 805.1C1517.9 799.9 1517.5 789.5 1528.3000000000002 787.5Z" fill="#9c9c9c" transform="rotate(-4 1526.9 793.9)"/>
</svg>
<div class="a" style="left:1508px;top:644px;width:37px;height:31px;overflow:hidden">
<span class="t" style="top:6.70px;font-size:8.2px;font-weight:bold;color:#f0b429;left:4.20px;letter-spacing:-0.401px;">WARNIN</span>
<span class="t" style="top:17.50px;font-size:8.2px;font-weight:bold;color:#f0b429;left:2.60px;letter-spacing:-0.023px;">AY 7:36</span>
</div>
<span class="t" style="top:548.80px;font-size:12.0px;color:#f4f4f4;left:1344.63px;-webkit-text-stroke:.25px #f4f4f4">Utility</span>
<span class="t" style="top:616.70px;font-size:11.2px;color:#f4f4f4;left:1164.30px;letter-spacing:-0.070px;-webkit-text-stroke:.3px #f4f4f4">Acce...i.app</span>
<span class="t" style="top:616.70px;font-size:11.2px;color:#f4f4f4;left:1231.50px;letter-spacing:-0.036px;-webkit-text-stroke:.3px #f4f4f4">Adob...ager</span>
<span class="t" style="top:616.70px;font-size:11.2px;color:#f4f4f4;left:1298.20px;letter-spacing:0.089px;-webkit-text-stroke:.3px #f4f4f4">Adob...loud</span>
<span class="t" style="top:616.70px;font-size:11.2px;color:#f4f4f4;left:1362.60px;letter-spacing:-0.100px;-webkit-text-stroke:.3px #f4f4f4">Adob...ience</span>
<span class="t" style="top:616.70px;font-size:11.2px;color:#f4f4f4;left:1430.00px;letter-spacing:-0.086px;-webkit-text-stroke:.3px #f4f4f4">Adob...r.app</span>
<span class="t" style="top:616.70px;font-size:11.2px;color:#f4f4f4;left:1496.00px;letter-spacing:-0.082px;-webkit-text-stroke:.3px #f4f4f4">Adob...allers</span>
<span class="t" style="top:683.30px;font-size:11.2px;color:#f4f4f4;left:1163.20px;letter-spacing:-0.060px;-webkit-text-stroke:.3px #f4f4f4">Adobe Sync</span>
<span class="t" style="top:683.30px;font-size:11.2px;color:#f4f4f4;left:1232.00px;letter-spacing:-0.139px;-webkit-text-stroke:.3px #f4f4f4">Assis....app</span>
<span class="t" style="top:683.30px;font-size:11.2px;color:#f4f4f4;left:1298.40px;letter-spacing:-0.112px;-webkit-text-stroke:.3px #f4f4f4">Assis....app</span>
<span class="t" style="top:683.30px;font-size:11.2px;color:#f4f4f4;left:1364.50px;letter-spacing:0.026px;-webkit-text-stroke:.3px #f4f4f4">Color....app</span>
<span class="t" style="top:683.30px;font-size:11.2px;color:#f4f4f4;left:1431.40px;letter-spacing:0.007px;-webkit-text-stroke:.3px #f4f4f4">Confi....app</span>
<span class="t" style="top:683.30px;font-size:11.2px;color:#f4f4f4;left:1495.20px;letter-spacing:0.007px;-webkit-text-stroke:.3px #f4f4f4">Console.app</span>
<span class="t" style="top:749.90px;font-size:11.2px;color:#f4f4f4;left:1162.20px;letter-spacing:-0.000px;-webkit-text-stroke:.3px #f4f4f4">Grapher.app</span>
<span class="t" style="top:749.90px;font-size:11.2px;color:#f4f4f4;left:1230.20px;letter-spacing:0.034px;-webkit-text-stroke:.3px #f4f4f4">Infor...a.app</span>
<span class="t" style="top:749.90px;font-size:11.2px;color:#f4f4f4;left:1298.90px;letter-spacing:-0.060px;-webkit-text-stroke:.3px #f4f4f4">Istan....app</span>
<span class="t" style="top:749.90px;font-size:11.2px;color:#f4f4f4;left:1362.60px;-webkit-text-stroke:.3px #f4f4f4;clip-path:inset(0 47px 0 0)">Monit....app</span>
<span class="t" style="top:749.90px;font-size:11.2px;color:#f4f4f4;left:1430.00px;letter-spacing:-0.593px;-webkit-text-stroke:.3px #f4f4f4">Scam...h.app</span>
<span class="t" style="top:749.90px;font-size:11.2px;color:#f4f4f4;left:1497.00px;letter-spacing:0.228px;-webkit-text-stroke:.3px #f4f4f4">Scrip....app</span>
<span class="t" style="top:816.60px;font-size:11.2px;color:#f4f4f4;left:1164.60px;letter-spacing:-0.068px;-webkit-text-stroke:.3px #f4f4f4">Termi....app</span>
<span class="t" style="top:816.60px;font-size:11.2px;color:#f4f4f4;left:1231.00px;letter-spacing:0.156px;-webkit-text-stroke:.3px #f4f4f4">Utilit...t.app</span>
<span class="t" style="top:816.60px;font-size:11.2px;color:#f4f4f4;left:1296.60px;letter-spacing:0.104px;-webkit-text-stroke:.3px #f4f4f4">Utilit...c.app</span>
<span class="t" style="top:816.60px;font-size:11.2px;color:#f4f4f4;left:1366.30px;letter-spacing:0.103px;-webkit-text-stroke:.3px #f4f4f4">Utilit....app</span>
<span class="t" style="top:816.60px;font-size:11.2px;color:#f4f4f4;left:1431.40px;letter-spacing:0.102px;-webkit-text-stroke:.3px #f4f4f4">Utilit...r.app</span>
<span class="t" style="top:816.60px;font-size:11.2px;color:#f4f4f4;left:1499.30px;letter-spacing:0.054px;-webkit-text-stroke:.3px #f4f4f4">Apri...inder</span>
<div class="a" style="left:1380px;top:744.2px;width:161px;height:23.4px;border-radius:3.5px;background:#2c2c2c;border:1px solid #5c5c5c;box-shadow:0 1px 3px rgba(0,0,0,.5)"></div>
<span class="t" style="top:750.10px;font-size:11.2px;color:#f4f4f4;left:1391.10px;letter-spacing:0.055px;-webkit-text-stroke:.3px #f4f4f4">Scambio File Bluetooth.app</span>
<svg style="left:1340px;top:838px" width="50" height="20" viewBox="1340 838 50 20"><path d="M1350 841.4H1378V842.6C1372 842.6 1370.6 846 1367.6 850.6Q1364.4 855.4 1361.2 850.6C1358.2 846 1356.8 842.6 1350 842.6Z" fill="#2a2a2a"/><path d="M1350 842.4C1356.8 842.4 1358.2 846 1361.2 850.6Q1364.4 855.4 1367.6 850.6C1370.6 846 1372 842.4 1378 842.4" fill="none" stroke="#4a4a4a" stroke-width="1"/></svg>
<!-- STATUS BAR -->
<span class="t" style="top:844.70px;font-size:10.6px;color:#e6e6e6;left:20.00px;letter-spacing:-0.363px;-webkit-text-stroke:.2px #e6e6e6">Pagina 1 di 1</span>
<span class="t" style="top:844.70px;font-size:10.6px;color:#e6e6e6;left:95.50px;letter-spacing:-0.114px;-webkit-text-stroke:.2px #e6e6e6">0 parole</span>
<span class="t" style="top:844.70px;font-size:10.6px;color:#e6e6e6;left:182.00px;letter-spacing:-0.034px;-webkit-text-stroke:.2px #e6e6e6">Italiano (Italia)</span>
<span class="t" style="top:844.70px;font-size:10.6px;color:#e6e6e6;left:1268.60px;letter-spacing:-0.415px;-webkit-text-stroke:.2px #e6e6e6">Focus</span>
<span class="t" style="top:844.70px;font-size:10.6px;color:#e6e6e6;left:1554.60px;letter-spacing:-0.570px;-webkit-text-stroke:.2px #e6e6e6">140%</span>
<div class="a" style="left:1305px;top:843.5px;width:31px;height:15.5px;background:#4b4b4b"></div>
<svg style="left:0;top:838px" width="1600" height="24" viewBox="0 838 1600 24">
 <g fill="none" stroke="#d6d6d6" stroke-width="1">
  <path d="M150.5 845.2H155.6V853.6H150.5ZM155.6 845.2H160.2V849M155.6 853.6H158"/>
  <path d="M158 851.4 159.6 853.2 162.6 849.2" stroke-width="1.2"/>
  <rect x="1250.8" y="845.8" width="11.2" height="8"/>
  <path d="M1252.6 849V847.6H1254.4M1258.4 847.6H1260.2V849M1260.2 850.6V852H1258.4M1254.4 852H1252.6V850.6" stroke-width=".9"/>
  <rect x="1314.5" y="844.8" width="11" height="9.6" stroke="#d0d0d0"/>
  <path d="M1315 847.2H1325M1315 849.6H1325M1315 852H1325" stroke="#bdbdbd"/>
  <path d="M1343.6 845H1352.6V849M1343.6 845V853H1349" stroke="#cfcfcf"/>
  <path d="M1345 847.2H1351.4M1345 849.4H1350M1345 851.4H1348.6" stroke="#aaa" stroke-width=".9"/>
 </g>
 <circle cx="1353.6" cy="852.4" r="3.6" fill="#e6e6e6"/><path d="M1351.4 851.2Q1353 850 1354 851.6T1355.8 853.6M1352.6 855Q1353.2 853.4 1354.6 854.6" stroke="#444" stroke-width=".8" fill="none"/>
 <g fill="#d6d6d6"><rect x="1375.6" y="846" width="1.6" height="1.4"/><rect x="1378.8" y="846" width="7.4" height="1.3"/><rect x="1378" y="849" width="1.6" height="1.4"/><rect x="1381" y="849" width="5.2" height="1.3"/><rect x="1378" y="851.6" width="1.6" height="1.4"/><rect x="1381" y="851.6" width="5.2" height="1.3"/><rect x="1375.6" y="853.6" width="1.6" height="1.4"/><rect x="1378.8" y="853.6" width="6" height="1.3"/>
 <rect x="1404" y="845.8" width="11.6" height="1.3"/><rect x="1404" y="848.4" width="10" height="1.3"/><rect x="1404" y="851" width="11.6" height="1.3"/><rect x="1404" y="853.4" width="8.6" height="1.3"/>
 <rect x="1431.4" y="849" width="7.4" height="1.8" fill="#f0f0f0"/><rect x="1533" y="849" width="7.4" height="1.8" fill="#f0f0f0"/><rect x="1535.8" y="846.2" width="1.8" height="7.4" fill="#f0f0f0"/></g>
 <rect x="1445" y="848.4" width="81.4" height="3" rx="1.5" fill="#6a6a6a"/>
 <circle cx="1489.4" cy="849.8" r="5" fill="#cfcfcf"/>
</svg>
<!-- DOCK -->
<div id="dock" class="a"></div>
<svg style="left:150px;top:858px" width="1300" height="42" viewBox="150 858 1300 42">
<defs><linearGradient id="fnd" x1="0" y1="0" x2="0" y2="1"><stop offset="0" stop-color="#2aa6f8"/><stop offset="1" stop-color="#0d6ad6"/></linearGradient><linearGradient id="fnw" x1="0" y1="0" x2="0" y2="1"><stop offset="0" stop-color="#f6f8fb"/><stop offset="1" stop-color="#cfdbe8"/></linearGradient><radialGradient id="ffx" cx=".5" cy=".35" r=".7"><stop offset="0" stop-color="#ffe04a"/><stop offset=".45" stop-color="#ff9a1e"/><stop offset=".8" stop-color="#ff4a2a"/><stop offset="1" stop-color="#e8187a"/></radialGradient><radialGradient id="ffg" cx=".4" cy=".4" r=".7"><stop offset="0" stop-color="#a05cf0"/><stop offset="1" stop-color="#5a2ad0"/></radialGradient><linearGradient id="edg" x1="0" y1="0" x2="1" y2="1"><stop offset="0" stop-color="#1ea0e0"/><stop offset=".5" stop-color="#1a78c8"/><stop offset="1" stop-color="#0c4e94"/></linearGradient><linearGradient id="edg2" x1="0" y1="0" x2="1" y2="0"><stop offset="0" stop-color="#2ac0d8"/><stop offset="1" stop-color="#4cd860"/></linearGradient><linearGradient id="tg" x1="0" y1="0" x2="0" y2="1"><stop offset="0" stop-color="#2aa8e8"/><stop offset="1" stop-color="#1a84c8"/></linearGradient><linearGradient id="mus" x1="0" y1="0" x2="0" y2="1"><stop offset="0" stop-color="#ff3a6a"/><stop offset=".5" stop-color="#d05ae0"/><stop offset="1" stop-color="#3a8cff"/></linearGradient><linearGradient id="fb2" x1="0" y1="0" x2="0" y2="1"><stop offset="0" stop-color="#2fb8ea"/><stop offset=".5" stop-color="#3ab4de"/><stop offset="1" stop-color="#2298c6"/></linearGradient><linearGradient id="sp" x1="0" y1="0" x2="0" y2="1"><stop offset="0" stop-color="#aeb4b8"/><stop offset="1" stop-color="#6e7478"/></linearGradient><linearGradient id="tr" x1="0" y1="0" x2="1" y2="0"><stop offset="0" stop-color="#5a6064"/><stop offset=".5" stop-color="#7a8084"/><stop offset="1" stop-color="#4e5458"/></linearGradient><linearGradient id="sky" x1="0" y1="0" x2="0" y2="1"><stop offset="0" stop-color="#2a7ad8"/><stop offset="1" stop-color="#a8d0f0"/></linearGradient></defs>
<path d="M155.5 868Q155.5 866.1 157.4 866.1H170.6C168.4 872 167.6 877 167.4 881H170.2C170.2 885 170.4 888 171 890.5H157.4Q155.5 890.5 155.5 888.6Z" fill="url(#fnd)"/>
<path d="M170.6 866.1H179.6Q181.5 866.1 181.5 868V888.6Q181.5 890.5 179.6 890.5H171C170.4 888 170.2 885 170.2 881H167.4C167.6 877 168.4 872 170.6 866.1Z" fill="url(#fnw)"/>
<path d="M162.8 872.4V875.4M174.8 872.4V875.4" stroke="#1a2a3a" stroke-width="1.1" stroke-linecap="round"/><path d="M160 882.6Q168 888.4 177.4 882.4" fill="none" stroke="#1a2a3a" stroke-width="1"/>
<circle cx="168.4" cy="896.6" r="1.2" fill="#b4a6e4"/>
<rect x="188.2" y="866.2" width="27.4" height="23.6" rx="1.8" fill="#0a0e0e" stroke="#4a5254" stroke-width="1"/>
<path d="M192.9 868V888M195.8 868V888M198.7 868V888M201.6 868V888M204.5 868V888M207.4 868V888M210.3 868V888M213.2 868V888M190 870.9H214M190 873.8H214M190 876.7H214M190 879.6H214M190 882.5H214M190 885.4H214" stroke="#1c463c" stroke-width=".4" fill="none"/>
<path d="M194 881H197L198 879.6L198.8 881L199.8 871L200.8 884L201.8 880.6H203.4C204.6 877.6 206 877.6 207 880.6L208.6 879.6L210 880.8L212 880" fill="none" stroke="#58d8b4" stroke-width=".8"/>
<path d="M236.6 863.4C240.4 866 242 869.6 241.6 872.4C244.8 870.6 247.6 873 248.6 877C249.6 885.4 243.4 892.4 235 892.4C226.8 892.4 220.8 886 221 878.4C221.2 874.6 222.4 871.6 224 869.6C224 868 224.4 866.6 225.2 865.6C226 867.6 227.4 868.8 229.4 869.4C231.6 868 234.4 867.6 236.4 868.2C236 866.6 236 865 236.6 863.4Z" fill="url(#ffx)"/>
<path d="M236.6 863.4C240.4 866 242 869.6 241.6 872.4C244.8 870.6 247.6 873 248.6 877C248.4 871 244 865.4 236.6 863.4Z" fill="#ffd83a"/>
<circle cx="236.2" cy="878.6" r="6.6" fill="url(#ffg)"/><path d="M227.6 875C230.6 872.6 235 872.4 237.4 874.6C235 875 233.6 876.4 234 878.4C231 878.8 228.4 877.4 227.6 875Z" fill="#ff8a1e"/><path d="M221.4 880C223 886 228 890 234 890.4C228 892.6 221.6 887 221.4 880Z" fill="#e8187a" opacity=".6"/>
<circle cx="268.6" cy="878" r="13.2" fill="none" stroke="#ff1b4d" stroke-width="1.9"/><ellipse cx="268.6" cy="878" rx="6.9" ry="11.4" fill="none" stroke="#ff1b4d" stroke-width="1.8"/>
<circle cx="301.8" cy="878" r="14" fill="url(#edg)"/><path d="M288.4 874C290 867 296 863.8 302.4 864C311 864.4 316.4 871 315.6 878C315 882.6 311 884.6 307.4 884C304.4 883.4 304 881 305 879.6C306.4 877.6 305.4 874.4 301.4 873.6C296 872.6 290.4 876 288.4 874Z" fill="url(#edg2)"/><path d="M296 879.4C295 884.6 299 890 305 890.4C309 890.6 312 889 314 886.6C310 888 304 887.4 301.6 883.4C300.4 881.4 300.6 879 301.6 877.6C299 877 296.6 877.6 296 879.4Z" fill="#0c4486"/>
<g transform="rotate(-9 335 878)"><rect x="323.6" y="865" width="22.8" height="26.4" fill="#f2f2f2"/><rect x="325.4" y="866.8" width="19.2" height="22.8" fill="url(#sky)"/><path d="M331 869.6C332.4 871 333.4 873.6 334.4 876.4C337 876.4 341 877.6 343.4 880C340.4 879.8 338 880.2 336.6 881.4L337.4 885L335 883.6L333.4 885.4L333.4 881C331.6 878.6 330 874 331 869.6Z" fill="#8a6a4a"/><path d="M331 869.6C331.6 871.4 333 873 334 874.4L332.4 875.4C331.2 873.6 330.6 871.4 331 869.6Z" fill="#f4f0e8"/></g>
<path d="M360.4 866.1H380.4Q381.8 866.1 381.8 867.5V880H360.4Z" fill="#1490df"/><rect x="363" y="866.1" width="9.4" height="7" fill="#0a64b8"/><rect x="372.4" y="866.1" width="9.4" height="7" fill="#28a8ea"/><rect x="363" y="873.1" width="9.4" height="7" fill="#1078d0"/><rect x="372.4" y="873.1" width="9.4" height="7" fill="#1490df"/>
<rect x="360.4" y="878" width="21.4" height="10" fill="#0f5aa8"/><path d="M360.4 879L371 885.6L381.8 879V888.8Q381.8 890.2 380.4 890.2H361.8Q360.4 890.2 360.4 888.8Z" fill="#28a8ea"/><path d="M360.4 890.2L381.8 879V888.8Q381.8 890.2 380.4 890.2Z" fill="#1a88d8"/>
<rect x="354.2" y="871.4" width="13.6" height="13.6" rx="1.2" fill="#0f6cbd"/>
<path d="M388 868.4L399.4 866.8V877.2H388ZM400.8 866.6L414.9 864.9V877.2H400.8ZM388 878.6H399.4V889L388 887.4ZM400.8 878.6H414.9V890.8L400.8 889.2Z" fill="#0a8cf0"/>
<rect x="409.2" y="880" width="2.4" height="13" rx="1" fill="#f03a28"/><rect x="413.4" y="880" width="2.4" height="13" rx="1" fill="#f03a28"/>
<rect x="420" y="864.6" width="29.6" height="21.4" rx="1" fill="#1a1a1a"/><rect x="421" y="865.6" width="27.6" height="17" fill="#0a78e0"/><rect x="420" y="884" width="29.6" height="3.6" fill="#d8dadc"/><path d="M432 887.6H438L439.6 892.6H430.4Z" fill="#c4c6c8"/><path d="M429.6 871.6H433V875H429.6ZM433.8 871.6H437.2V875H433.8ZM429.6 875.8H433V879.2H429.6ZM433.8 875.8H437.2V879.2H433.8Z" fill="#5ac8ff"/>
<rect x="437.4" y="863" width="3.7" height="30.6" rx="1.6" fill="#ff0a14"/><rect x="444.3" y="863" width="3.7" height="30.6" rx="1.6" fill="#ff0a14"/>
<g transform="rotate(-6 468 878)"><rect x="456" y="865.4" width="24.4" height="25.6" rx="2" fill="#fafafa"/><path d="M456 867.4Q456 865.4 458 865.4H478.4Q480.4 865.4 480.4 867.4V871.8H456Z" fill="#f0383c"/><rect x="456" y="889" width="24.4" height="2" rx="1" fill="#888"/></g>
<circle cx="501.8" cy="878" r="14.2" fill="#f6f6f6"/>
<ellipse cx="501.8" cy="871.4" rx="3.4" ry="5.8" fill="#f8b820" opacity=".85" transform="rotate(-45 501.8 878)"/>
<ellipse cx="501.8" cy="871.4" rx="3.4" ry="5.8" fill="#f87a1e" opacity=".85" transform="rotate(0 501.8 878)"/>
<ellipse cx="501.8" cy="871.4" rx="3.4" ry="5.8" fill="#f0383c" opacity=".85" transform="rotate(45 501.8 878)"/>
<ellipse cx="501.8" cy="871.4" rx="3.4" ry="5.8" fill="#d848a8" opacity=".85" transform="rotate(90 501.8 878)"/>
<ellipse cx="501.8" cy="871.4" rx="3.4" ry="5.8" fill="#8a5ad8" opacity=".85" transform="rotate(135 501.8 878)"/>
<ellipse cx="501.8" cy="871.4" rx="3.4" ry="5.8" fill="#3a8ae8" opacity=".85" transform="rotate(180 501.8 878)"/>
<ellipse cx="501.8" cy="871.4" rx="3.4" ry="5.8" fill="#38b8b0" opacity=".85" transform="rotate(225 501.8 878)"/>
<ellipse cx="501.8" cy="871.4" rx="3.4" ry="5.8" fill="#7ac83a" opacity=".85" transform="rotate(270 501.8 878)"/>
<circle cx="534.9" cy="878" r="14" fill="url(#tg)"/><path d="M526.6 878.4L543 871.6L540.4 885.6L535.4 882L532.8 884.6L532.4 880.8L539.6 874.6L530.6 880Z" fill="#fff"/>
<path d="M554.6 891.6L556.6 885A14 14 0 1 1 561.6 889.8Z" fill="#fafafa"/><circle cx="568.6" cy="877.4" r="11.8" fill="#2cc84a"/><path d="M563.6 871.4L565.8 870.8L567.4 874.2L566 875.6C566.8 877.6 568.6 879.4 570.6 880.2L572 878.8L575.4 880.4L574.8 882.6C573.6 884 571 883.8 568.6 882.4C565.6 880.6 563.4 877.4 563 874.4C562.8 873 563 872 563.6 871.4Z" fill="#fff"/>
<circle cx="602.6" cy="869.6" r="3.8" fill="#5a62d0"/><circle cx="611" cy="871" r="2.8" fill="#5a62d0"/><path d="M598 874.6H608.6V884Q608.6 889.6 603.4 889.6T598 884Z" fill="#6a72dc"/><path d="M607 874.6H614.8V882Q614.8 886.6 610.8 886.6Q608.6 886.6 607.6 885Z" fill="#4e56c0"/><rect x="588" y="871.2" width="12.6" height="13.6" rx="1.2" fill="#464eb8"/>
<rect x="627.4" y="866.5" width="20.6" height="23.8" rx="1.4" fill="#ca5ce8"/><rect x="642.4" y="872" width="5.6" height="6" fill="#a83ad0"/><rect x="642.4" y="878" width="5.6" height="6" fill="#9030b8"/><rect x="642.4" y="884" width="5.6" height="6.3" fill="#7a22a0"/><rect x="621.2" y="871.4" width="13.2" height="13.4" rx="1.2" fill="#7a1fa8"/>
<circle cx="671.4" cy="878" r="13.2" fill="#f06a48"/><path d="M671.4 864.8A13.2 13.2 0 0 1 684.6 878H671.4Z" fill="#ff8a68"/><path d="M658.2 878H684.6A13.2 13.2 0 0 1 658.2 878Z" fill="#d8482c"/><rect x="654.2" y="871.4" width="13.2" height="13.4" rx="1.2" fill="#c43a1c"/>
<g transform="rotate(-8 701.6 878)"><rect x="688.6" y="865" width="26" height="26" fill="#fafafa"/><rect x="707.4" y="871.4" width="1.5" height="11" fill="#1aa8f0"/></g>
<rect x="722" y="865" width="26" height="27" rx="3" fill="#1d5878"/><path d="M748 876L741 890L748 892Z" fill="#8a9098"/><path d="M744.6 869.4A10.4 10.4 0 1 0 745 887.4L741.6 882.6A4.8 4.8 0 1 1 741.4 873.6Z" fill="#f4f6f8"/><path d="M736 874C739 872 743 873 745 876L748 872V866Q744 866 740 868Z" fill="#12384e" opacity=".55"/>
<rect x="755.3000000000001" y="865.2" width="26.4" height="25" rx="4" fill="#001e26" stroke="#26c9ff" stroke-width="1.4"/>
<rect x="788.8000000000001" y="865.2" width="26.4" height="25" rx="0.6" fill="#0c2836" stroke="#a8d4f0" stroke-width="1.4"/>
<rect x="821.9000000000001" y="865.2" width="26.4" height="25" rx="0.6" fill="#2e0516" stroke="#ff3f94" stroke-width="1.4"/>
<rect x="855.3000000000001" y="865.2" width="26.4" height="25" rx="0.6" fill="#2e0516" stroke="#ff3f94" stroke-width="1.4"/>
<g transform="rotate(0 901.6 878)"><path d="M901.6 863.6L906.6 868.6L913.6 868L913.0 875L917.6 878L913.0 883L913.6 890L906.6 889.4L901.6 894L896.6 889.4L889.6 890L890.2 883L885.6 878L890.2 875L889.6 868L896.6 868.6Z" fill="#e8e6f8"/><path d="M901.6 863.6L906.6 868.6L901.6 871ZM913.6 868L913.0 875L908.6 872ZM917.6 878L913.0 883L910.6 878ZM913.6 890L906.6 889.4L908.6 885ZM901.6 894L896.6 889.4L901.6 886ZM889.6 890L890.2 883L894.6 885ZM885.6 878L890.2 875L892.6 879ZM889.6 868L896.6 868.6L894.6 872Z" fill="#5a52c0"/><circle cx="901.6" cy="878.6" r="7.4" fill="#fbfbff"/></g>
<g transform="rotate(-7 932 878)"><rect x="920" y="867" width="24" height="22" fill="#1a9af0"/><path d="M924 884L932 870L936 878M928 880H938" stroke="#8ad0ff" stroke-width=".7" fill="none"/></g><rect x="939.6" y="871" width="8.4" height="19" rx="1.6" fill="#111" transform="rotate(8 943 880)"/>
<circle cx="968.3" cy="878.2" r="14.1" fill="#e8462c"/><path d="M973.4 871L968.5 875.4L973.4 880M963 876.8L968 881L963.4 885.2" fill="none" stroke="#fff" stroke-width="2.4" stroke-linecap="square" stroke-linejoin="miter"/>
<rect x="987.2" y="863.4" width="29.6" height="29" rx="5" fill="#3e3e46"/><path d="M987.2 868.4Q987.2 863.4 992.2 863.4H1011.8Q1016.8 863.4 1016.8 868.4V872.6H987.2Z" fill="#f0243c"/>
<path d="M995 889.4A4 4 0 0 1 994.4 881.6A5 5 0 0 1 1001 878A5.4 5.4 0 0 1 1010 880.6A4.4 4.4 0 0 1 1010.4 889.4Z" fill="#fafafa"/><path d="M997.4 884L1002.4 879.4L1007.4 884H1006V888H1003.6V885.4H1001.2V888H998.8V884Z" fill="#2c2c34"/>
<rect x="989.6" y="866" width=".9" height="5" fill="#fff"/><rect x="991.2" y="866" width=".9" height="5" fill="#fff"/>
<circle cx="1035.5" cy="878" r="14.2" fill="#f4f4f6"/><path d="M1031.6 871.2L1041.6 869V883.4A2.8 2.6 0 1 1 1039.8 881V873.2L1033.4 874.6V885.4A2.8 2.6 0 1 1 1031.6 883Z" fill="url(#mus)"/>
<rect x="1054.6" y="866.4" width="27.6" height="23.4" rx="1.8" fill="#1a1a1a" stroke="#4e5254" stroke-width="1"/><path d="M1058.4 870.6L1061.6 872.2L1058.4 873.8M1062.4 875H1066" stroke="#f4f4f4" stroke-width="1" fill="none"/>
<circle cx="1101.8" cy="878" r="14.2" fill="#fafafa"/><path d="M1098 868.6L1100.6 868.4C1102 867.6 1105 867.6 1106.6 869.4C1109.6 869.6 1110.4 871.6 1110.2 875.6C1110 880 1109.4 884.6 1107.4 886.6C1105.4 888.4 1102.6 887.6 1102.8 885.4C1103 883.6 1105.4 884.6 1105.6 883C1105.6 881.6 1104 881.4 1102.6 881.6C1102.6 883.6 1101.6 885 1099.6 884.8C1096.6 884.6 1094 882 1093.6 878.4C1093.4 876 1094 874 1095 873H1098Z" fill="#22b030"/><path d="M1097.4 869L1097.4 872.4H1094.4Z" fill="#22b030"/><circle cx="1106.4" cy="875.8" r=".8" fill="#fafafa"/>
<rect x="1125.8" y="865.6" width="1" height="28" fill="#5c3a42"/><rect x="1241.2" y="865.6" width="1" height="28" fill="#5c3a42"/>
<circle cx="1149.9" cy="878" r="16.2" fill="#fdfdfd"/><path d="M1142.4 872.6V880.4Q1142.4 884.4 1146.1 884.4T1149.9 880.4V876.4V880.4Q1149.9 884.4 1153.6 884.4T1157.4 880.4V872.6" fill="none" stroke="#1aa6c8" stroke-width="1.5" stroke-linecap="round"/><circle cx="1149.9" cy="896.8" r="1.2" fill="#b89098"/>
<rect x="1170" y="865.8" width="26.8" height="25" rx="1" fill="url(#sp)"/><circle cx="1183.4" cy="878.3" r="10" fill="#3a3c3e"/><circle cx="1183.4" cy="878.3" r="8" fill="#8a9094"/><circle cx="1183.4" cy="878.3" r="6.6" fill="#4a4c4e"/><path d="M1183.4 878.3V884.8M1183.4 878.3L1189 875M1183.4 878.3L1177.8 875" stroke="#a0a6aa" stroke-width="1.8"/><circle cx="1183.4" cy="878.3" r="1.8" fill="#a0a6aa"/>
<path d="M1192.8 878.3L1194.4 878.3M1192.3 881.2L1193.9 881.7M1191.0 883.8L1192.3 884.8M1188.9 885.9L1189.9 887.2M1186.3 887.2L1186.8 888.8M1183.4 887.7L1183.4 889.3M1180.5 887.2L1180.0 888.8M1177.9 885.9L1176.9 887.2M1175.8 883.8L1174.5 884.8M1174.5 881.2L1172.9 881.7M1174.0 878.3L1172.4 878.3M1174.5 875.4L1172.9 874.9M1175.8 872.8L1174.5 871.8M1177.9 870.7L1176.9 869.4M1180.5 869.4L1180.0 867.8M1183.4 868.9L1183.4 867.3M1186.3 869.4L1186.8 867.8M1188.9 870.7L1189.9 869.4M1191.0 872.8L1192.3 871.8M1192.3 875.4L1193.9 874.9" stroke="#3a3c3e" stroke-width="1.6"/>
<rect x="1209.2" y="866.5" width="20.8" height="23.4" rx="1.4" fill="#0e4a9a"/><path d="M1209.2 867.9Q1209.2 866.5 1210.6 866.5H1228.6Q1230 866.5 1230 867.9V872.4H1209.2Z" fill="#2a8ad8"/><rect x="1209.2" y="872.4" width="20.8" height="5.8" fill="#1a70c4"/><rect x="1209.2" y="878.2" width="20.8" height="5.8" fill="#155cb0"/><rect x="1202.8" y="871.5" width="13.4" height="13.4" rx="1.2" fill="#1a52b8"/><circle cx="1216.5" cy="896.8" r="1.2" fill="#b89098"/>
<path d="M1253.6 863.3H1269.0L1276.0 870.6V891.8H1253.6Z" fill="#fcfcfc"/><path d="M1269.0 863.3L1276.0 870.6H1269.0Z" fill="#d0d0d0"/>
<rect x="1265.6" y="873.6" width="2.4" height="1.7" fill="#21a366"/>
<rect x="1268.5" y="873.6" width="2.4" height="1.7" fill="#107c41"/>
<rect x="1271.4" y="873.6" width="2.4" height="1.7" fill="#33c481"/>
<rect x="1265.6" y="875.8" width="2.4" height="1.7" fill="#107c41"/>
<rect x="1268.5" y="875.8" width="2.4" height="1.7" fill="#33c481"/>
<rect x="1271.4" y="875.8" width="2.4" height="1.7" fill="#185c37"/>
<rect x="1265.6" y="878.0" width="2.4" height="1.7" fill="#33c481"/>
<rect x="1268.5" y="878.0" width="2.4" height="1.7" fill="#185c37"/>
<rect x="1271.4" y="878.0" width="2.4" height="1.7" fill="#21a366"/>
<rect x="1265.6" y="880.2" width="2.4" height="1.7" fill="#185c37"/>
<rect x="1268.5" y="880.2" width="2.4" height="1.7" fill="#21a366"/>
<rect x="1271.4" y="880.2" width="2.4" height="1.7" fill="#107c41"/>
<rect x="1250.1999999999998" y="870.5" width="14" height="14" rx="1.2" fill="#107c41"/>
<path d="M1287 863.3H1302.4L1309.4 870.6V891.8H1287Z" fill="#fcfcfc"/><path d="M1302.4 863.3L1309.4 870.6H1302.4Z" fill="#d0d0d0"/>
<rect x="1299.0" y="873.6" width="2.4" height="1.7" fill="#21a366"/>
<rect x="1301.9" y="873.6" width="2.4" height="1.7" fill="#107c41"/>
<rect x="1304.8" y="873.6" width="2.4" height="1.7" fill="#33c481"/>
<rect x="1299.0" y="875.8" width="2.4" height="1.7" fill="#107c41"/>
<rect x="1301.9" y="875.8" width="2.4" height="1.7" fill="#33c481"/>
<rect x="1304.8" y="875.8" width="2.4" height="1.7" fill="#185c37"/>
<rect x="1299.0" y="878.0" width="2.4" height="1.7" fill="#33c481"/>
<rect x="1301.9" y="878.0" width="2.4" height="1.7" fill="#185c37"/>
<rect x="1304.8" y="878.0" width="2.4" height="1.7" fill="#21a366"/>
<rect x="1299.0" y="880.2" width="2.4" height="1.7" fill="#185c37"/>
<rect x="1301.9" y="880.2" width="2.4" height="1.7" fill="#21a366"/>
<rect x="1304.8" y="880.2" width="2.4" height="1.7" fill="#107c41"/>
<rect x="1283.6" y="870.5" width="14" height="14" rx="1.2" fill="#107c41"/>
<path d="M1316.9 867.9Q1316.9 866.5 1318.3000000000002 866.5H1325.3000000000002Q1326.3000000000002 866.5 1326.9 867.5L1327.9 869.1H1345.7Q1346.9 869.1 1346.9 870.3V874.5H1316.9Z" fill="#1f86b4"/><rect x="1316.9" y="870.1" width="30" height="19.799999999999997" rx="1.2" fill="url(#fb2)"/><rect x="1316.9" y="870.1" width="30" height=".9" fill="#62d0f6" opacity=".8"/>
<rect x="1352.5" y="865.8" width="24.8" height="25.2" rx="3.6" fill="#2a1014" stroke="#b48c94" stroke-width="1.2"/><path d="M1358.8 875.8H1371.2L1365 883Z" fill="#caa2aa"/>
<path d="M1383.5 867.9Q1383.5 866.5 1384.9 866.5H1391.9Q1392.9 866.5 1393.5 867.5L1394.5 869.1H1412.3Q1413.5 869.1 1413.5 870.3V874.5H1383.5Z" fill="#1f86b4"/><rect x="1383.5" y="870.1" width="30" height="19.799999999999997" rx="1.2" fill="url(#fb2)"/><rect x="1383.5" y="870.1" width="30" height=".9" fill="#62d0f6" opacity=".8"/>
<circle cx="1398.5" cy="879.6" r="6.4" fill="#2590bc"/><path d="M1397.3 875.6H1399.7V879.4H1402L1398.5 883.2L1395 879.4H1397.3Z" fill="#3ab0dc"/>
<path d="M1420.2 866.6Q1431.6 863 1443 866.6L1440.6 890Q1431.6 893.6 1422.6 890Z" fill="url(#tr)"/><ellipse cx="1431.6" cy="866.8" rx="11.4" ry="2.2" fill="#8a9094" stroke="#a0a6aa" stroke-width=".5"/>
</svg>
<span class="t" style="top:873.65px;font-size:9.5px;font-weight:bold;color:#fff;left:357.30px;">O</span>
<span class="t" style="top:866.40px;font-size:4.6px;font-weight:bold;color:#fff;left:462.58px;transform:rotate(-6deg)">GEN</span>
<span class="t" style="top:873.80px;font-size:13.6px;color:#2a2a2a;left:460.69px;transform:rotate(-6deg);letter-spacing:-.6px">25</span>
<span class="t" style="top:873.20px;font-size:10.0px;font-weight:bold;color:#fff;left:591.25px;">T</span>
<span class="t" style="top:873.30px;font-size:10.0px;font-weight:bold;color:#fff;left:624.18px;">N</span>
<span class="t" style="top:873.30px;font-size:10.0px;font-weight:bold;color:#fff;left:657.46px;">P</span>
<span class="t" style="top:872.90px;font-size:11.0px;font-weight:bold;color:#111;left:693.61px;transform:rotate(-8deg);letter-spacing:-.3px">iA</span>
<span class="t" style="top:871.00px;font-size:14.4px;color:#d2f0ff;left:760.40px;letter-spacing:-.3px;-webkit-text-stroke:.45px #d2f0ff">Ps</span>
<span class="t" style="top:871.00px;font-size:14.4px;color:#b4dcf8;left:795.70px;letter-spacing:-.1px;-webkit-text-stroke:.45px #b4dcf8">Lr</span>
<span class="t" style="top:871.00px;font-size:14.4px;color:#ff3f94;left:829.19px;-webkit-text-stroke:.45px #ff3f94">Id</span>
<span class="t" style="top:871.00px;font-size:14.4px;color:#ff3f94;left:862.59px;-webkit-text-stroke:.45px #ff3f94">Id</span>
<span class="t" style="top:871.90px;font-size:13.4px;color:#111;left:897.23px;">B</span>
<span class="t" style="top:865.50px;font-size:5.4px;font-weight:bold;color:#fff;left:994.88px;letter-spacing:-.35px">Parallels</span>
<span class="t" style="top:873.40px;font-size:10.0px;font-weight:bold;color:#fff;left:1204.77px;">W</span>
<span class="t" style="top:872.10px;font-size:11.0px;font-weight:bold;color:#fff;left:1253.53px;">X</span>
<span class="t" style="top:872.10px;font-size:11.0px;font-weight:bold;color:#fff;left:1286.93px;">X</span>
</div>
</body>
</html>
